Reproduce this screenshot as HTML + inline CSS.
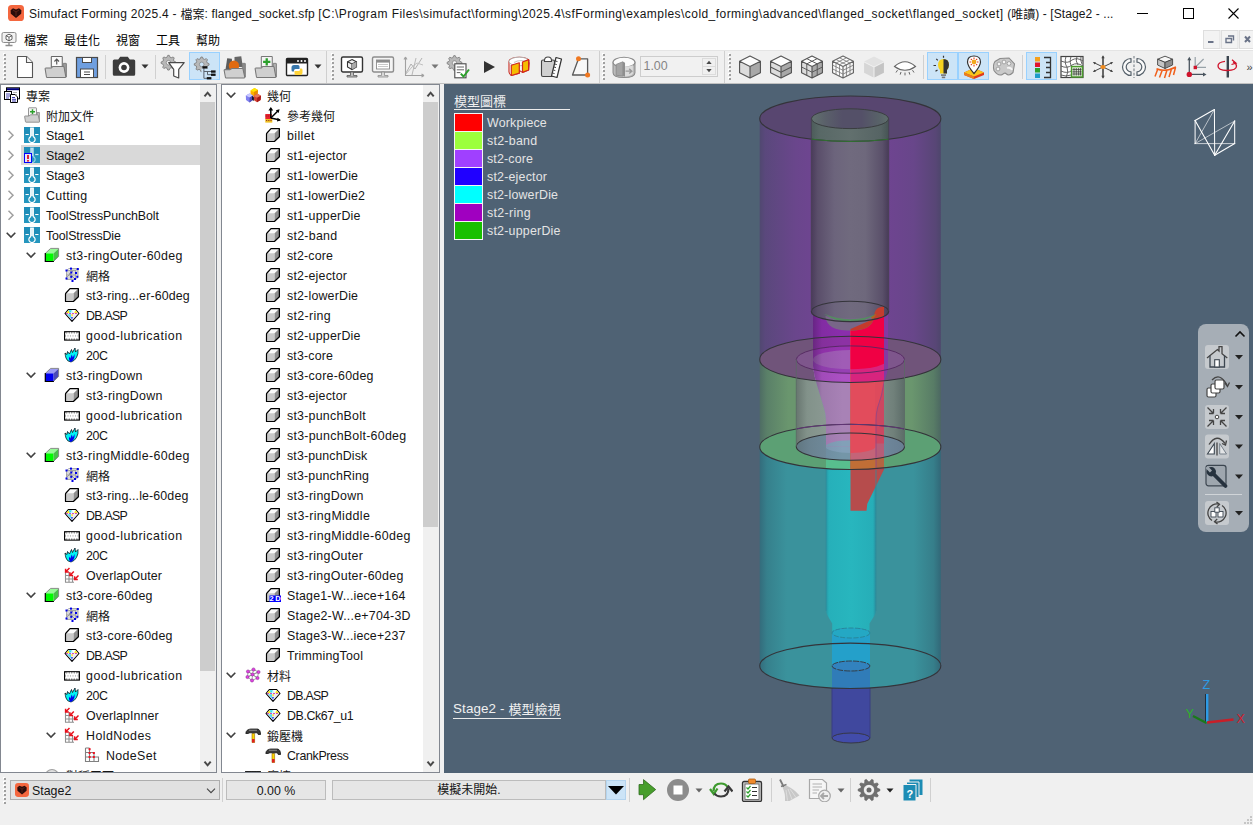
<!DOCTYPE html>
<html lang="zh-Hant"><head><meta charset="utf-8"><title>Simufact Forming</title>
<style>
html,body{margin:0;padding:0}
body{width:1253px;height:825px;overflow:hidden;background:#f0f0f0;font-family:"Liberation Sans","Noto Sans CJK TC",sans-serif;font-size:12px;color:#000;position:relative}
div,span,svg{position:absolute;box-sizing:border-box}
i{font-style:normal;font-size:12px;letter-spacing:0;position:relative;top:1px}
.t{white-space:nowrap;line-height:20px;height:20px;font-size:12.4px;color:#151515}
.row{left:0;height:20px;width:100%}
#title{left:0;top:0;width:1253px;height:27px;background:#fff}
#menu{left:0;top:27px;width:1253px;height:23px;background:#fff}
#tb{left:0;top:50px;width:1253px;height:34px;background:#f0f0f0;border-top:1px solid #e4e4e4}
.panel{background:#fff;border:1px solid #828790;overflow:hidden}
.sb{background:#f0f0f0;width:16px;top:0;bottom:0;right:0}
.thumb{background:#cdcdcd;left:0;width:15px}
#view{left:444px;top:84px;width:809px;height:689px;background:#4f6274;overflow:hidden}
#bottom{left:0;top:773px;width:1253px;height:52px;background:#f0f0f0}
.m{top:3px;height:23px;line-height:23px;font-size:12.4px;white-space:nowrap}
</style></head>
<body>
<div id="title"><svg style="left:8px;top:5px" width="16" height="16" viewBox="0 0 16 16"><rect x="0" y="0" width="16" height="16" rx="3.6" fill="#f4673f"/><path d="M2.6 5.2L5 3.2L8 4.4L11 3.2L13.4 5.2L13.2 8.8L8 13L2.8 8.8Z" fill="#2a0c0a"/><path d="M5 5L8 7L11 5M8 7V11" stroke="#6a2a1c" stroke-width="0.8" fill="none"/></svg><span class="t" style="left:29px;top:3px;letter-spacing:0.257px;font-size:12px;height:22px;line-height:22px;white-space:pre">Simufact Forming 2025.4 - </span><span class="t" style="left:180.4px;top:3px;letter-spacing:0.182px;font-size:12px;height:22px;line-height:22px;white-space:pre"><i>檔案</i>: flanged_socket.sfp </span><span class="t" style="left:318.3px;top:3px;letter-spacing:0.444px;font-size:12px;height:22px;line-height:22px;white-space:pre">[C:\Program Files\simufact\forming\2025.4\sfForming\examples\cold_forming\advanced\flanged_socket\flanged_socket] </span><span class="t" style="left:1007.2px;top:3px;letter-spacing:0.089px;font-size:12px;height:22px;line-height:22px;white-space:pre">(<i>唯讀</i>) - [Stage2 - ...</span><svg style="left:1120px;top:0" width="133" height="27" viewBox="0 0 133 27"><path d="M17 13.5H28" stroke="#000" stroke-width="1"/><rect x="63.5" y="8.500" width="10" height="10" fill="none" stroke="#000" stroke-width="1"/><path d="M108.500 8.500L118.500 18.500M118.500 8.500L108.500 18.500" stroke="#000" stroke-width="1.1"/></svg></div>
<div id="menu"><svg style="left:1px;top:4px" width="16" height="16" viewBox="0 0 16 16"><rect x="1" y="1.5" width="14" height="10" rx="1.5" fill="#f2f2f2" stroke="#8c8c8c" stroke-width="1"/><path d="M8 3.2L11 4.7V8.2L8 9.8L5 8.2V4.7Z" fill="#fff" stroke="#555" stroke-width="0.9"/><path d="M5 4.7L8 6.2L11 4.7M8 6.2V9.8" stroke="#555" stroke-width="0.9" fill="none"/><path d="M8 11.5V14M4.5 14.5H11.5" stroke="#8c8c8c" stroke-width="1.4"/></svg><span class="m" style="left:24px;font-size:12px">檔案</span><span class="m" style="left:64px;font-size:12px">最佳化</span><span class="m" style="left:116px;font-size:12px">視窗</span><span class="m" style="left:156px;font-size:12px">工具</span><span class="m" style="left:196px;font-size:12px">幫助</span><svg style="left:1202px;top:0" width="51" height="23" viewBox="0 0 51 23"><rect x="1.5" y="3.5" width="16.5" height="18" fill="#f3f3f3" stroke="#dedede" stroke-width="1"/><rect x="19.5" y="3.5" width="16.5" height="18" fill="#f3f3f3" stroke="#dedede" stroke-width="1"/><rect x="37.5" y="3.5" width="16.5" height="18" fill="#f3f3f3" stroke="#dedede" stroke-width="1"/><path d="M6 15H11.500" stroke="#6a7388" stroke-width="2"/><path d="M26 9H31.500V13.500M24 11.500H29.500V15.500H24Z" fill="none" stroke="#6a7388" stroke-width="1.400"/><path d="M43 9.500L48 15M48 9.500L43 15" stroke="#6a7388" stroke-width="2"/></svg></div>
<div id="tb"><svg style="left:3px;top:2px" width="4" height="28" viewBox="0 0 4 28"><rect x="0" y="0" width="2" height="2" fill="#fff"/><rect x="1" y="1" width="2" height="2" fill="#a0a0a0"/><rect x="0" y="4" width="2" height="2" fill="#fff"/><rect x="1" y="5" width="2" height="2" fill="#a0a0a0"/><rect x="0" y="8" width="2" height="2" fill="#fff"/><rect x="1" y="9" width="2" height="2" fill="#a0a0a0"/><rect x="0" y="12" width="2" height="2" fill="#fff"/><rect x="1" y="13" width="2" height="2" fill="#a0a0a0"/><rect x="0" y="16" width="2" height="2" fill="#fff"/><rect x="1" y="17" width="2" height="2" fill="#a0a0a0"/><rect x="0" y="20" width="2" height="2" fill="#fff"/><rect x="1" y="21" width="2" height="2" fill="#a0a0a0"/><rect x="0" y="24" width="2" height="2" fill="#fff"/><rect x="1" y="25" width="2" height="2" fill="#a0a0a0"/></svg><svg style="left:13px;top:4px;overflow:visible" width="24" height="24" viewBox="0 0 24 24"><path d="M4.500 1.500H13.500L19.500 7.500V22.500H4.500Z" fill="#fff" stroke="#555" stroke-width="1.1" stroke-linejoin="round"/><path d="M13.500 1.500V7.500H19.500" fill="#f4f4f4" stroke="#555" stroke-width="1.1" stroke-linejoin="round"/></svg><svg style="left:44px;top:4px;overflow:visible" width="24" height="24" viewBox="0.5 0.5 23 23"><path d="M7.500 12V2.500Q7.500 2 8 2H17.500Q18 2 18 2.500V12Z" fill="#fafafa" stroke="#666" stroke-width="1"/><path d="M12.700 9.500V4.500M10.500 6.700L12.700 4.500L14.900 6.700" fill="none" stroke="#555" stroke-width="1.1"/><path d="M19 8.500H21.500Q22 8.500 22 9V21.500H19Z" fill="#9a9a9a" stroke="#777" stroke-width="0.800"/><path d="M1.600 13.800Q1.500 13 2.300 13H7.500L9 11.500H18.800Q19.600 11.500 19.700 12.200L21.400 21.200Q21.500 22 20.700 22H3.600Q2.900 22 2.800 21.300Z" fill="#cfcfcf" stroke="#777" stroke-width="1"/></svg><svg style="left:75px;top:4px;overflow:visible" width="24" height="24" viewBox="0 0 24 24"><rect x="1.500" y="2.500" width="21" height="20" fill="#6f9fe0" stroke="#4a4a4a" stroke-width="1.200"/><rect x="7.500" y="2.500" width="9" height="5" fill="#fff" stroke="#4a4a4a" stroke-width="1"/><rect x="5.500" y="14" width="13" height="8.500" fill="#fff" stroke="#4a4a4a" stroke-width="1"/><path d="M9 17H15M9 19.500H15" stroke="#4a4a4a" stroke-width="1.200"/></svg><div style="left:105px;top:4px;width:1px;height:24px;background:#d0d0d0"></div><svg style="left:112px;top:4px;overflow:visible" width="24" height="24" viewBox="0 0 24 24"><path d="M0.800 6Q0.800 4.500 2.300 4.500H6.200L8.200 1.800H15.800L17.800 4.500H21.700Q23.200 4.500 23.200 6V19.300Q23.200 20.800 21.700 20.800H2.300Q0.800 20.800 0.800 19.300Z" fill="#3c3c3c"/><circle cx="12" cy="12.500" r="5.400" fill="#fff"/><circle cx="12" cy="12.500" r="2.800" fill="#3c3c3c"/></svg><svg style="left:141px;top:13px" width="8" height="5" viewBox="0 0 8 5"><path d="M0.500 0.500H7.500L4 4.500Z" fill="#333"/></svg><div style="left:155px;top:4px;width:1px;height:24px;background:#d0d0d0"></div><svg style="left:161px;top:4px;overflow:visible" width="24" height="24" viewBox="0 0 24 24"><path d="M14.86 6.97L14.86 8.43L12.88 9.33L12.46 10.35L13.22 12.39L12.19 13.42L10.15 12.66L9.13 13.08L8.23 15.06L6.77 15.06L5.87 13.08L4.85 12.66L2.81 13.42L1.78 12.39L2.54 10.35L2.12 9.33L0.14 8.43L0.14 6.97L2.12 6.07L2.54 5.05L1.78 3.01L2.81 1.98L4.85 2.74L5.87 2.32L6.77 0.34L8.23 0.34L9.13 2.32L10.15 2.74L12.19 1.98L13.22 3.01L12.46 5.05L12.88 6.07Z" fill="#b8b8b8" stroke="#808080" stroke-width="0.9" stroke-linejoin="round"/><circle cx="7.500" cy="7.700" r="2.300" fill="#f0f0f0" stroke="#808080" stroke-width="0.700"/><path d="M7.700 7.600H23.200L17.700 14.400V23L12.700 21V14.400Z" fill="#fff" stroke="#4a4a4a" stroke-width="1.200" stroke-linejoin="round"/></svg><div style="left:189px;top:1px;width:31px;height:28px;background:#cce4f7;border:1px solid #99d1ff"></div><svg style="left:192px;top:4px;overflow:visible" width="24" height="24" viewBox="0 0 24 24"><path d="M17.06 8.67L17.06 10.13L15.08 11.03L14.66 12.05L15.42 14.09L14.39 15.12L12.35 14.36L11.33 14.78L10.43 16.76L8.97 16.76L8.07 14.78L7.05 14.36L5.01 15.12L3.98 14.09L4.74 12.05L4.32 11.03L2.34 10.13L2.34 8.67L4.32 7.77L4.74 6.75L3.98 4.71L5.01 3.68L7.05 4.44L8.07 4.02L8.97 2.04L10.43 2.04L11.33 4.02L12.35 4.44L14.39 3.68L15.42 4.71L14.66 6.75L15.08 7.77Z" fill="#b8b8b8" stroke="#808080" stroke-width="0.9" stroke-linejoin="round"/><circle cx="9.700" cy="9.400" r="2.300" fill="#cce4f7" stroke="#808080" stroke-width="0.700"/><rect x="9.500" y="13.500" width="15" height="11" fill="#cce4f7"/><path d="M11.900 13V23.300H15M11.900 16.500H19M15.500 16.500V19.700H19" fill="none" stroke="#5a646e" stroke-width="1"/><rect x="10.400" y="11.200" width="5" height="2.300" fill="#111"/><rect x="19" y="15.400" width="4.600" height="2.300" fill="#111"/><rect x="19" y="18.600" width="4.600" height="2.300" fill="#111"/><rect x="14.800" y="22.100" width="4.600" height="2.300" fill="#111"/></svg><svg style="left:223px;top:4px;overflow:visible" width="24" height="24" viewBox="0.5 0.5 23 23"><path d="M3 14L4.500 3.500L9 4L9.500 14Z" fill="#5c5c5c"/><path d="M11.500 12V2.500L18 1.800L19.500 12Z" fill="#666"/><circle cx="11" cy="10.800" r="5" fill="#e06a10"/><path d="M19 8.500H21.500Q22 8.500 22 9V21.500H19Z" fill="#8a8a8a" stroke="#777" stroke-width="0.700"/><path d="M1.600 15.300Q1.500 14.500 2.300 14.500H7L9 13.500H18.800Q19.600 13.500 19.700 14.200L21.400 21.700Q21.500 22.500 20.700 22.500H3.600Q2.900 22.500 2.800 21.800Z" fill="#d0d0d0" stroke="#777" stroke-width="1"/></svg><svg style="left:254px;top:4px;overflow:visible" width="24" height="24" viewBox="0.5 0.5 23 23"><path d="M7.500 12V2.500Q7.500 2 8 2H17.500Q18 2 18 2.500V12Z" fill="#f4f4f4" stroke="#777" stroke-width="1"/><path d="M12.700 3.500V10.500M9.200 7H16.200" stroke="#2ca02c" stroke-width="2.200"/><path d="M19 8.500H21.500Q22 8.500 22 9V21.500H19Z" fill="#b0b0b0" stroke="#777" stroke-width="0.800"/><path d="M1.600 13.800Q1.500 13 2.300 13H7.500L9 11.500H18.800Q19.600 11.500 19.700 12.200L21.400 21.200Q21.500 22 20.700 22H3.600Q2.900 22 2.800 21.300Z" fill="#cfcfcf" stroke="#777" stroke-width="1"/></svg><svg style="left:285px;top:4px;overflow:visible" width="24" height="24" viewBox="0 0 24 24"><rect x="1.500" y="3.500" width="21" height="17" rx="1" fill="#fff" stroke="#222" stroke-width="1.400"/><rect x="1.500" y="3.500" width="21" height="5" fill="#222"/><circle cx="13" cy="6" r="1" fill="#fff"/><circle cx="16.500" cy="6" r="1" fill="#fff"/><circle cx="20" cy="6" r="1" fill="#fff"/><path d="M9 10H13Q14.500 10 14.500 11.500V14H10.500Q9 14 9 15.500V16.500H7.500Q6.500 16.500 6.500 15V12.500Q6.500 10 9 10Z" fill="#3776ab"/><path d="M15 20H11Q9.500 20 9.500 18.500V16H13.500Q15 16 15 14.500V13.500H16.500Q17.500 13.500 17.500 15V17.500Q17.500 20 15 20Z" fill="#ffd43b"/></svg><svg style="left:314px;top:13px" width="8" height="5" viewBox="0 0 8 5"><path d="M0.500 0.500H7.500L4 4.500Z" fill="#333"/></svg><div style="left:326px;top:0;width:1px;height:33px;background:#cfcfcf"></div><svg style="left:331px;top:2px" width="4" height="28" viewBox="0 0 4 28"><rect x="0" y="0" width="2" height="2" fill="#fff"/><rect x="1" y="1" width="2" height="2" fill="#a0a0a0"/><rect x="0" y="4" width="2" height="2" fill="#fff"/><rect x="1" y="5" width="2" height="2" fill="#a0a0a0"/><rect x="0" y="8" width="2" height="2" fill="#fff"/><rect x="1" y="9" width="2" height="2" fill="#a0a0a0"/><rect x="0" y="12" width="2" height="2" fill="#fff"/><rect x="1" y="13" width="2" height="2" fill="#a0a0a0"/><rect x="0" y="16" width="2" height="2" fill="#fff"/><rect x="1" y="17" width="2" height="2" fill="#a0a0a0"/><rect x="0" y="20" width="2" height="2" fill="#fff"/><rect x="1" y="21" width="2" height="2" fill="#a0a0a0"/><rect x="0" y="24" width="2" height="2" fill="#fff"/><rect x="1" y="25" width="2" height="2" fill="#a0a0a0"/></svg><svg style="left:340px;top:4px;overflow:visible" width="24" height="24" viewBox="0 0 24 24"><rect x="1.500" y="2" width="21" height="15" rx="1.500" fill="#fff" stroke="#333" stroke-width="1.400"/><path d="M12 4.500L16.500 6.800V12L12 14.500L7.500 12V6.800Z" fill="#f0f0f0" stroke="#333" stroke-width="1.100"/><path d="M7.500 6.800L12 9L16.500 6.800M12 9V14.500" fill="none" stroke="#333" stroke-width="1.100"/><path d="M12 9L16.500 6.800V12L12 14.500Z" fill="#aaa"/><path d="M10.500 17H13.500V20.500H17V22H7V20.500H10.500Z" fill="#bdbdbd" stroke="#555" stroke-width="0.800"/></svg><svg style="left:371px;top:4px;overflow:visible" width="24" height="24" viewBox="0 0 24 24"><rect x="1.500" y="2" width="21" height="15" rx="1.500" fill="#f4f4f4" stroke="#8c8c8c" stroke-width="1.400"/><rect x="5.500" y="5" width="13" height="9" fill="#fff" stroke="#8c8c8c" stroke-width="0.900"/><rect x="5.500" y="5" width="13" height="2.600" fill="#8c8c8c"/><path d="M7 9.500H17M7 11.500H17" stroke="#bbb" stroke-width="0.800"/><path d="M10.500 17H13.500V20.500H17V22H7V20.500H10.500Z" fill="#d8d8d8" stroke="#8c8c8c" stroke-width="0.800"/></svg><svg style="left:402px;top:4px;overflow:visible" width="24" height="24" viewBox="0 0 24 24"><path d="M3.500 2V20.500H22M3.500 2L2 4.500M3.500 2L5 4.500M22 20.500L19.500 19M22 20.500L19.500 22" fill="none" stroke="#a0a0a0" stroke-width="1.100"/><path d="M4 18L9 9L13 14L20 3" fill="none" stroke="#b0b0b0" stroke-width="1"/><path d="M4 19L10 12L15 8L21 10" fill="none" stroke="#c0c0c0" stroke-width="1"/><path d="M14 3L10 20" fill="none" stroke="#b8b8b8" stroke-width="1"/></svg><svg style="left:431px;top:13px" width="8" height="5" viewBox="0 0 8 5"><path d="M0.500 0.500H7.500L4 4.500Z" fill="#777"/></svg><svg style="left:446px;top:4px;overflow:visible" width="24" height="24" viewBox="0 0 24 24"><path d="M15.86 7.27L15.86 8.73L13.88 9.63L13.46 10.65L14.22 12.69L13.19 13.72L11.15 12.96L10.13 13.38L9.23 15.36L7.77 15.36L6.87 13.38L5.85 12.96L3.81 13.72L2.78 12.69L3.54 10.65L3.12 9.63L1.14 8.73L1.14 7.27L3.12 6.37L3.54 5.35L2.78 3.31L3.81 2.28L5.85 3.04L6.87 2.62L7.77 0.64L9.23 0.64L10.13 2.62L11.15 3.04L13.19 2.28L14.22 3.31L13.46 5.35L13.88 6.37Z" fill="#b8b8b8" stroke="#808080" stroke-width="0.9" stroke-linejoin="round"/><circle cx="8.500" cy="8" r="2.300" fill="#f0f0f0" stroke="#808080" stroke-width="0.700"/><rect x="8.800" y="8.800" width="11.200" height="14" fill="#fff" stroke="#4a4a4a" stroke-width="1.100"/><path d="M10.800 12H18M10.800 14.800H18M10.800 17.600H14.500" stroke="#666" stroke-width="1"/><path d="M14.800 18.600L17.500 21.500L23 14.500" fill="none" stroke="#2ca02c" stroke-width="2"/></svg><svg style="left:477px;top:4px;overflow:visible" width="24" height="24" viewBox="0 0 24 24"><path d="M7 6L18 12L7 18Z" fill="#333"/></svg><svg style="left:508px;top:4px;overflow:visible" width="24" height="24" viewBox="0 0 24 24"><path d="M1 6.500V17Q1.500 19.500 3.300 20.500L11.300 18.200V15.500L14.500 17.400L20.600 15L21.400 6.500A10.200 4.300 0 0 0 1 6.500Z" fill="#fafafa" stroke="#c8281e" stroke-width="1.100" stroke-linejoin="round"/><ellipse cx="11.200" cy="6.500" rx="10.200" ry="4.300" fill="#fff" stroke="#b0b0b0" stroke-width="0.900"/><path d="M6 7.500Q11 4.500 17 6" fill="none" stroke="#c8c8c8" stroke-width="1.200"/><path d="M3.300 10.200L11.300 7.800V18.200L3.300 20.500Z" fill="#f5bc00" stroke="#d0281e" stroke-width="1.200" stroke-linejoin="round"/><path d="M14.500 7L20.600 4.600V15L14.500 17.400Z" fill="#f5bc00" stroke="#d0281e" stroke-width="1.200" stroke-linejoin="round"/></svg><svg style="left:539px;top:4px;overflow:visible" width="24" height="24" viewBox="0 0 24 24"><path d="M2.500 6.500Q2.500 5 4 5H14Q15.500 5 15.500 6.500V20Q15.500 21.500 14 21.500H4Q2.500 21.500 2.500 20Z" fill="#d0d0d0" stroke="#444" stroke-width="1.100"/><path d="M5.500 5.500Q5.500 2 9 2Q12.500 2 12.500 5.500V6.500H5.500Z" fill="#fff" stroke="#444" stroke-width="1.100"/><path d="M17 2.500L22.500 4L18 22.500L12.500 21Z" fill="#fff" stroke="#333" stroke-width="1.200" stroke-linejoin="round"/><path d="M16.500 6L18.500 6.600M15.800 9L17.800 9.600M15 12L17 12.600M14.300 15L16.300 15.600M13.600 18L15.600 18.600" stroke="#333" stroke-width="0.900"/></svg><svg style="left:570px;top:4px;overflow:visible" width="24" height="24" viewBox="0 0 24 24"><path d="M8.500 3.800H17.600V20H2.500Z" fill="#f8f8f8" stroke="#5a5a5a" stroke-width="1.300" stroke-linejoin="round"/><circle cx="8.500" cy="3.800" r="2.500" fill="#f07820"/><circle cx="17.600" cy="20" r="2.500" fill="#f07820"/></svg><div style="left:599px;top:0;width:1px;height:33px;background:#cfcfcf"></div><svg style="left:602px;top:2px" width="4" height="28" viewBox="0 0 4 28"><rect x="0" y="0" width="2" height="2" fill="#fff"/><rect x="1" y="1" width="2" height="2" fill="#a0a0a0"/><rect x="0" y="4" width="2" height="2" fill="#fff"/><rect x="1" y="5" width="2" height="2" fill="#a0a0a0"/><rect x="0" y="8" width="2" height="2" fill="#fff"/><rect x="1" y="9" width="2" height="2" fill="#a0a0a0"/><rect x="0" y="12" width="2" height="2" fill="#fff"/><rect x="1" y="13" width="2" height="2" fill="#a0a0a0"/><rect x="0" y="16" width="2" height="2" fill="#fff"/><rect x="1" y="17" width="2" height="2" fill="#a0a0a0"/><rect x="0" y="20" width="2" height="2" fill="#fff"/><rect x="1" y="21" width="2" height="2" fill="#a0a0a0"/><rect x="0" y="24" width="2" height="2" fill="#fff"/><rect x="1" y="25" width="2" height="2" fill="#a0a0a0"/></svg><svg style="left:612px;top:4px;overflow:visible" width="24" height="24" viewBox="0.5 0.5 23 23"><path d="M1.500 7.500V17.500Q1.500 22 12 22Q22.500 22 22.500 17.500V7.500Z" fill="#bcbcbc" stroke="#8a8a8a" stroke-width="1"/><ellipse cx="12" cy="7.500" rx="10.500" ry="4.800" fill="#fbfbfb" stroke="#8a8a8a" stroke-width="1"/><path d="M4.500 9.500L11 7V20.500L4.500 20Z" fill="#a4a4a4" stroke="#8a8a8a" stroke-width="0.800"/><path d="M11 7L13 8V21L11 20.500Z" fill="#8e8e8e"/><path d="M13 11Q18 12 20.500 10V18.500Q18 21 13 21Z" fill="#dcdcdc"/><path d="M13.500 16H19M17 13.800L19.500 16L17 18.200" fill="none" stroke="#9a9a9a" stroke-width="1.300"/></svg><div style="left:640px;top:5px;width:78px;height:21px;background:#f1f1f1;border:1px solid #cdcdcd"></div><span class="t" style="left:643.500px;top:5px;color:#858585;font-size:12.400px">1.00</span><div style="left:702px;top:7px;width:14px;height:9px;background:#f0f0f0;border:1px solid #dcdcdc"></div><div style="left:702px;top:15px;width:14px;height:9px;background:#f0f0f0;border:1px solid #dcdcdc"></div><svg style="left:706px;top:9px" width="6" height="13" viewBox="0 0 6 13"><path d="M0.300 4L3 0.800L5.700 4ZM0.300 9L3 12.200L5.700 9Z" fill="#484848"/></svg><div style="left:724px;top:0;width:1px;height:33px;background:#cfcfcf"></div><svg style="left:728px;top:2px" width="4" height="28" viewBox="0 0 4 28"><rect x="0" y="0" width="2" height="2" fill="#fff"/><rect x="1" y="1" width="2" height="2" fill="#a0a0a0"/><rect x="0" y="4" width="2" height="2" fill="#fff"/><rect x="1" y="5" width="2" height="2" fill="#a0a0a0"/><rect x="0" y="8" width="2" height="2" fill="#fff"/><rect x="1" y="9" width="2" height="2" fill="#a0a0a0"/><rect x="0" y="12" width="2" height="2" fill="#fff"/><rect x="1" y="13" width="2" height="2" fill="#a0a0a0"/><rect x="0" y="16" width="2" height="2" fill="#fff"/><rect x="1" y="17" width="2" height="2" fill="#a0a0a0"/><rect x="0" y="20" width="2" height="2" fill="#fff"/><rect x="1" y="21" width="2" height="2" fill="#a0a0a0"/><rect x="0" y="24" width="2" height="2" fill="#fff"/><rect x="1" y="25" width="2" height="2" fill="#a0a0a0"/></svg><svg style="left:738px;top:4px;overflow:visible" width="24" height="24" viewBox="0.5 0.5 23 23"><path d="M12 1.500L22 6.500L12 11.500L2 6.500Z" fill="#fdfdfd"/><path d="M2 6.500L12 11.500V22.500L2 17.500Z" fill="#dcdcdc"/><path d="M12 11.500L22 6.500V17.500L12 22.500Z" fill="#a8a8a8"/><path d="M12 1.500L22 6.500V17.500L12 22.500L2 17.500V6.500ZM2 6.500L12 11.500L22 6.500M12 11.500V22.500" fill="none" stroke="#555" stroke-width="1.100" stroke-linejoin="round"/></svg><svg style="left:769px;top:4px;overflow:visible" width="24" height="24" viewBox="0.5 0.5 23 23"><path d="M12 1.500L22 6.500L12 11.500L2 6.500Z" fill="#fdfdfd"/><path d="M2 6.500L12 11.500V22.500L2 17.500Z" fill="#dcdcdc"/><path d="M12 11.500L22 6.500V17.500L12 22.500Z" fill="#a8a8a8"/><path d="M12 1.500L22 6.500V17.500L12 22.500L2 17.500V6.500ZM2 6.500L12 11.500L22 6.500M12 11.500V22.500" fill="none" stroke="#555" stroke-width="1.100" stroke-linejoin="round"/><path d="M2 12L12 17L22 12" fill="none" stroke="#555" stroke-width="1"/></svg><svg style="left:800px;top:4px;overflow:visible" width="24" height="24" viewBox="0.5 0.5 23 23"><path d="M12 1.500L22 6.500L12 11.500L2 6.500Z" fill="#fdfdfd"/><path d="M2 6.500L12 11.500V22.500L2 17.500Z" fill="#dcdcdc"/><path d="M12 11.500L22 6.500V17.500L12 22.500Z" fill="#a8a8a8"/><path d="M12 1.500L22 6.500V17.500L12 22.500L2 17.500V6.500ZM2 6.500L12 11.500L22 6.500M12 11.500V22.500" fill="none" stroke="#555" stroke-width="1.100" stroke-linejoin="round"/><path d="M2 12L12 17L22 12M7 9V20M17 9V20M7 4L17 9M17 4L7 9" fill="none" stroke="#555" stroke-width="0.900"/></svg><svg style="left:831px;top:4px;overflow:visible" width="24" height="24" viewBox="0.5 0.5 23 23"><path d="M12 1.500L22 6.500L12 11.500L2 6.500Z" fill="#fff"/><path d="M2 6.500L12 11.500V22.500L2 17.500Z" fill="#fff"/><path d="M12 11.500L22 6.500V17.500L12 22.500Z" fill="#f4f4f4"/><path d="M12 1.500L22 6.500V17.500L12 22.500L2 17.500V6.500ZM2 6.500L12 11.500L22 6.500M12 11.500V22.500" fill="none" stroke="#666" stroke-width="1.100" stroke-linejoin="round"/><path d="M2 10.200L12 15.200L22 10.200M2 13.800L12 18.800L22 13.800M5.300 8.200V19.200M8.700 9.800V20.800M15.300 9.800V20.800M18.700 8.200V19.200M5.300 4.800L15.300 9.800M8.700 3.200L18.700 8.200M18.700 4.800L8.700 9.800M15.300 3.200L5.300 8.200" fill="none" stroke="#777" stroke-width="0.800"/></svg><svg style="left:862px;top:4px;overflow:visible" width="24" height="24" viewBox="0.5 0.5 23 23"><path d="M12 2L21.500 6.800L12 11.500L2.500 6.800Z" fill="#e2e2e2"/><path d="M2.500 7.800L11.500 12.300V22L2.500 17.500Z" fill="#d6d6d6"/><path d="M12.500 12.300L21.500 7.800V17.500L12.500 22Z" fill="#c4c4c4"/></svg><svg style="left:893px;top:4px;overflow:visible" width="24" height="24" viewBox="0 0 24 24"><path d="M1.500 11.500Q12 2 22.500 11.500Q12 19 1.500 11.500Z" fill="#fff" stroke="#666" stroke-width="1.100"/><path d="M4.500 15.200L3 17.500M8 17L7.200 19.600M12 17.600V20.400M16 17L16.800 19.600M19.500 15.200L21 17.500" stroke="#666" stroke-width="1"/></svg><div style="left:923px;top:4px;width:1px;height:24px;background:#d0d0d0"></div><div style="left:927px;top:1px;width:31px;height:28px;background:#cce4f7;border:1px solid #99d1ff"></div><svg style="left:930.5px;top:4px;overflow:visible" width="24" height="24" viewBox="0 0 24 24"><path d="M12.500 4Q18 4 18 10Q18 12.500 16 15V18.500H9V15Q7 12.500 7 10Q7 4 12.500 4Z" fill="#f6d21e"/><path d="M12.500 4Q18 4 18 10Q18 12.500 16 15V18.500H12.500Z" fill="#333"/><rect x="10" y="19.300" width="5" height="1.600" fill="#777"/><rect x="10.800" y="21.600" width="3.400" height="1.600" fill="#777"/><path d="M12.500 0.800V2.800M5.300 3.800L6.800 5.300M2.500 10.500H5M4.500 16.300L6.500 15" stroke="#333" stroke-width="1.200"/></svg><div style="left:958px;top:1px;width:31px;height:28px;background:#cce4f7;border:1px solid #99d1ff"></div><svg style="left:961.5px;top:4px;overflow:visible" width="24" height="24" viewBox="0 0 24 24"><path d="M2 17.500L12 13L22 17.500V20L12 24L2 20Z" fill="#e03a1e"/><path d="M2 17.500L12 13L22 17.500L12 21.500Z" fill="#f9c51c"/><path d="M2 17.500L12 21.500V24L2 20Z" fill="#e8801e"/><path d="M12 18.500Q5.500 11 5.500 7Q5.500 1 12 1Q18.500 1 18.500 7Q18.500 11 12 18.500Z" fill="#fff" stroke="#333" stroke-width="1.200"/><circle cx="12" cy="7" r="2.400" fill="#f4a81c"/><path d="M12 2.500V4M12 10V11.500M7.500 7H9M15 7H16.500M8.800 3.800L9.900 4.900M14.100 9.100L15.200 10.200M15.200 3.800L14.100 4.900M9.900 9.100L8.800 10.200" stroke="#e03a1e" stroke-width="1.100"/></svg><svg style="left:992px;top:4px;overflow:visible" width="24" height="24" viewBox="0 0 24 24"><path d="M8 3.500L17 3L22.500 9L21 17.500Q17 21.500 14.500 19Q13 17 10.500 19.500Q6 21.500 2 15.500Q0.500 10 3 6.500Z" fill="#c9c9c9" stroke="#8a8a8a" stroke-width="1.100"/><circle cx="7" cy="9" r="1.900" fill="#f4f4f4" stroke="#8a8a8a" stroke-width="0.700"/><circle cx="12" cy="7" r="1.900" fill="#f4f4f4" stroke="#8a8a8a" stroke-width="0.700"/><circle cx="17" cy="8.500" r="1.900" fill="#f4f4f4" stroke="#8a8a8a" stroke-width="0.700"/><circle cx="6" cy="14" r="1.900" fill="#f4f4f4" stroke="#8a8a8a" stroke-width="0.700"/><path d="M15 13Q19 12 20 15" fill="none" stroke="#f4f4f4" stroke-width="1.800"/></svg><div style="left:1022px;top:4px;width:1px;height:24px;background:#d0d0d0"></div><div style="left:1026px;top:1px;width:31px;height:28px;background:#cce4f7;border:1px solid #99d1ff"></div><svg style="left:1029.5px;top:4px;overflow:visible" width="24" height="24" viewBox="0 0 24 24"><rect x="5" y="2" width="5" height="4.500" fill="#f5a01c"/><rect x="5" y="7.500" width="5" height="4.500" fill="#e0142c"/><rect x="5" y="13" width="5" height="4.500" fill="#2ca02c"/><rect x="5" y="18.500" width="5" height="4.500" fill="#1c9cc8"/><path d="M14 2.500H20.500V22.500H14M16 7.500H20.500M16 12.500H20.500M16 17.500H20.500" fill="none" stroke="#333" stroke-width="1.300"/></svg><svg style="left:1060px;top:4px;overflow:visible" width="24" height="24" viewBox="0 0 24 24"><rect x="1" y="1.500" width="22" height="21" fill="#fff" stroke="#444" stroke-width="1.200"/><path d="M1 6Q8 9 12 5Q17 2 23 6M1 11Q7 14 12 10Q17 7 23 11M1 16Q7 19 12 15.500M1 20Q6 22 11 20M6 1.500Q4 8 7 12Q9 17 6 22.500M11 1.500Q9 8 12 12M17 1.500Q15 6 18 10M21 1.500Q20 5 22 9" fill="none" stroke="#555" stroke-width="0.900"/><rect x="11.500" y="11.500" width="11" height="10.500" fill="#d8e8d0" stroke="#4a9a2c" stroke-width="1.400"/><path d="M14 13V20.500M16.300 13V20.500M18.600 13V20.500M20.500 13V20.500M12.500 14.500H21.500M12.500 16.800H21.500M12.500 19H21.500" stroke="#333" stroke-width="0.700"/></svg><svg style="left:1091px;top:4px;overflow:visible" width="24" height="24" viewBox="0 0 24 24"><path d="M12 1.500V22.500" stroke="#464646" stroke-width="1.600"/><path d="M3 7.700L21 16.300M21 7.700L3 16.300" stroke="#464646" stroke-width="1"/><path d="M12 0.300L10.300 3.300H13.700ZM12 23.700L10.300 20.700H13.700Z" fill="#464646"/><path d="M1.800 7.100L4.900 7.200L3.700 9.500ZM22.200 7.100L19.100 7.200L20.300 9.500ZM1.800 16.900L4.900 16.800L3.700 14.500ZM22.200 16.900L19.100 16.800L20.300 14.500Z" fill="#464646"/><ellipse cx="12" cy="12" rx="2.600" ry="1.900" fill="#f08a1c"/></svg><svg style="left:1122px;top:4px;overflow:visible" width="24" height="24" viewBox="0 0 24 24"><path d="M9 3.500A8.500 8.500 0 0 0 9 20.500V16.800A4.800 4.800 0 0 1 9 7.200Z" fill="#fafafa" stroke="#55606a" stroke-width="1.200" stroke-linejoin="round"/><path d="M15 3.500A8.500 8.500 0 0 1 15 20.500V16.800A4.800 4.800 0 0 0 15 7.200Z" fill="#fafafa" stroke="#55606a" stroke-width="1.200" stroke-linejoin="round"/><path d="M12 1V23" stroke="#8a9298" stroke-width="1.300" stroke-dasharray="2.600 1.600"/></svg><svg style="left:1153px;top:4px;overflow:visible" width="24" height="24" viewBox="0 0 24 24"><path d="M2 21.500L5 13.500M6.500 22.500L9.500 14.500M11.500 23L14 15M16 22L18.500 14M20.500 20L22.500 12.500M3.500 13.800Q12 17.500 23 12" fill="none" stroke="#f0601c" stroke-width="1.500"/><path d="M12 1.200L19.600 4.200L12 7.400L4.600 4.200Z" fill="#f6f6f6" stroke="#444" stroke-width="0.900"/><path d="M4.600 4.200L12 7.400V13.500L4.600 10Z" fill="#c4c4c4" stroke="#444" stroke-width="0.900"/><path d="M12 7.400L19.600 4.200V10L12 13.500Z" fill="#8e8e8e" stroke="#444" stroke-width="0.900"/></svg><svg style="left:1184px;top:4px;overflow:visible" width="24" height="24" viewBox="0 0 24 24"><path d="M5.300 19.500V4M6 19.400H20.500" stroke="#4a545e" stroke-width="1.300" fill="none"/><path d="M5.300 1.800L3.300 5.200H7.300ZM22.500 19.400L19 17.400V21.400Z" fill="#4a545e"/><path d="M11.200 2V12.400H22M11.500 12L19.600 4" stroke="#98a2a8" stroke-width="1.200" fill="none"/><rect x="9.600" y="10.800" width="3.400" height="3.400" fill="#d0142c"/><circle cx="5.300" cy="19.400" r="2.700" fill="#d0142c"/></svg><svg style="left:1215px;top:4px;overflow:visible" width="24" height="24" viewBox="0 0 24 24"><path d="M12.800 1V22.500" stroke="#3a444e" stroke-width="2.400"/><path d="M18 7Q21.500 8.300 21.500 11Q21.500 15.500 12 15.500Q3 15.500 3 11Q3 7.200 10 6.400" fill="none" stroke="#d0142c" stroke-width="1.300"/><path d="M17 4.800L21 8.200L16.500 9.500" fill="none" stroke="#d0142c" stroke-width="1.300"/></svg><span class="t" style="left:1246.500px;top:6px;font-size:11px;color:#444;letter-spacing:-1px">»</span><div style="left:0;top:32px;width:1253px;height:1px;background:#c0c0c0"></div></div>
<div class="panel" style="left:0;top:84px;width:217px;height:689px"><svg style="left:3px;top:2px" width="16" height="16" viewBox="0 0 16 16"><rect x="2.5" y="0.8" width="13" height="11" fill="#fff" stroke="#000" stroke-width="1"/><rect x="3" y="1.2" width="12" height="2" fill="#00007a"/><path d="M9 5.5H13M9 7.5H13" stroke="#999" stroke-width="0.8"/><rect x="0.5" y="4.5" width="7" height="8" fill="#fff" stroke="#000"/><path d="M2 7H6M2 9H6M2 11H5" stroke="#2020a0" stroke-width="0.8"/><path d="M6.5 7.5H11L13.5 10V15.5H6.5Z" fill="#fff" stroke="#000"/><path d="M8 10.5H11M8 12.3H12M8 14H12" stroke="#2020a0" stroke-width="0.9"/></svg><span class="t" style="left:25px;top:1px"><i>專案</i></span><svg style="left:23px;top:22px" width="16" height="16" viewBox="0 0 16 16"><path d="M4.5 9V1.3Q4.5 0.8 5 0.8H12Q12.5 0.8 12.5 1.3V9Z" fill="#f4f4f4" stroke="#8a8a8a" stroke-width="0.9"/><path d="M8.5 2.2V7.2M6 4.7H11" stroke="#2ca02c" stroke-width="1.5"/><path d="M13 5.5H15.2Q15.7 5.5 15.7 6V14.5H13Z" fill="#b8b8b8" stroke="#8a8a8a" stroke-width="0.8"/><path d="M0.6 9.6Q0.5 9 1.1 9H5.2L6.4 7.8H13.6Q14.2 7.8 14.3 8.4L15.6 14.6Q15.7 15.2 15.1 15.2H2.1Q1.6 15.2 1.5 14.7Z" fill="#cfcfcf" stroke="#8a8a8a" stroke-width="0.9"/></svg><span class="t" style="left:45px;top:21px"><i>附加文件</i></span><svg style="left:3px;top:40px" width="16" height="20" viewBox="0 0 16 20"><path d="M4.5 5.7L9 10.2L4.5 14.7" fill="none" stroke="#a0a0a0" stroke-width="1.5"/></svg><svg style="left:23px;top:42px" width="16" height="16" viewBox="0 0 16 16"><rect x="0" y="0" width="16" height="16" fill="#2596be"/><rect x="0" y="0" width="16" height="8" fill="#1f8db8"/><path d="M6.7 1.2V9.6A3.1 3.1 0 1 0 9.3 9.6V1.2Z" fill="#2596be" stroke="#fff" stroke-width="1.2"/><rect x="7.2" y="1" width="1.6" height="8" fill="#fff"/><path d="M1.5 7.5H4.8M11.2 7.5H14.5" stroke="#fff" stroke-width="1.2"/></svg><span class="t" style="left:45px;top:41px;letter-spacing:-0.113px">Stage1</span><div style="left:20px;top:60px;width:179px;height:20px;background:#d9d9d9"></div><svg style="left:3px;top:60px" width="16" height="20" viewBox="0 0 16 20"><path d="M4.5 5.7L9 10.2L4.5 14.7" fill="none" stroke="#a0a0a0" stroke-width="1.5"/></svg><svg style="left:23px;top:62px" width="16" height="16" viewBox="0 0 16 16"><rect x="0" y="0" width="16" height="16" fill="#2596be"/><rect x="0" y="0" width="16" height="8" fill="#1f8db8"/><path d="M6.7 1.2V9.6A3.1 3.1 0 1 0 9.3 9.6V1.2Z" fill="#2596be" stroke="#9ed0e6" stroke-width="1.2"/><rect x="7.2" y="1" width="1.6" height="8" fill="#cfe8f3"/><path d="M11.2 7.5H14.5" stroke="#cfe8f3" stroke-width="1.2"/><rect x="0.5" y="6.5" width="7" height="9" fill="#e8e8f4" stroke="#0000ff" stroke-width="1"/><rect x="3.1" y="8" width="1.8" height="4" fill="#e0102a"/><rect x="3.1" y="13" width="1.8" height="1.6" fill="#e0102a"/></svg><span class="t" style="left:45px;top:61px;letter-spacing:-0.113px">Stage2</span><svg style="left:3px;top:80px" width="16" height="20" viewBox="0 0 16 20"><path d="M4.5 5.7L9 10.2L4.5 14.7" fill="none" stroke="#a0a0a0" stroke-width="1.5"/></svg><svg style="left:23px;top:82px" width="16" height="16" viewBox="0 0 16 16"><rect x="0" y="0" width="16" height="16" fill="#2596be"/><rect x="0" y="0" width="16" height="8" fill="#1f8db8"/><path d="M6.7 1.2V9.6A3.1 3.1 0 1 0 9.3 9.6V1.2Z" fill="#2596be" stroke="#fff" stroke-width="1.2"/><rect x="7.2" y="1" width="1.6" height="8" fill="#fff"/><path d="M1.5 7.5H4.8M11.2 7.5H14.5" stroke="#fff" stroke-width="1.2"/></svg><span class="t" style="left:45px;top:81px;letter-spacing:-0.113px">Stage3</span><svg style="left:3px;top:100px" width="16" height="20" viewBox="0 0 16 20"><path d="M4.5 5.7L9 10.2L4.5 14.7" fill="none" stroke="#a0a0a0" stroke-width="1.5"/></svg><svg style="left:23px;top:102px" width="16" height="16" viewBox="0 0 16 16"><rect x="0" y="0" width="16" height="16" fill="#2596be"/><rect x="0" y="0" width="16" height="8" fill="#1f8db8"/><path d="M6.7 1.2V9.6A3.1 3.1 0 1 0 9.3 9.6V1.2Z" fill="#2596be" stroke="#fff" stroke-width="1.2"/><rect x="7.2" y="1" width="1.6" height="8" fill="#fff"/><path d="M1.5 7.5H4.8M11.2 7.5H14.5" stroke="#fff" stroke-width="1.2"/></svg><span class="t" style="left:45px;top:101px;letter-spacing:0.325px">Cutting</span><svg style="left:3px;top:120px" width="16" height="20" viewBox="0 0 16 20"><path d="M4.5 5.7L9 10.2L4.5 14.7" fill="none" stroke="#a0a0a0" stroke-width="1.5"/></svg><svg style="left:23px;top:122px" width="16" height="16" viewBox="0 0 16 16"><rect x="0" y="0" width="16" height="16" fill="#2596be"/><rect x="0" y="0" width="16" height="8" fill="#1f8db8"/><path d="M6.7 1.2V9.6A3.1 3.1 0 1 0 9.3 9.6V1.2Z" fill="#2596be" stroke="#fff" stroke-width="1.2"/><rect x="7.2" y="1" width="1.6" height="8" fill="#fff"/><path d="M1.5 7.5H4.8M11.2 7.5H14.5" stroke="#fff" stroke-width="1.2"/></svg><span class="t" style="left:45px;top:121px;letter-spacing:-0.075px">ToolStressPunchBolt</span><svg style="left:3px;top:140px" width="16" height="20" viewBox="0 0 16 20"><path d="M2.700 7.700L7 12L11.300 7.700" fill="none" stroke="#404040" stroke-width="1.600"/></svg><svg style="left:23px;top:142px" width="16" height="16" viewBox="0 0 16 16"><rect x="0" y="0" width="16" height="16" fill="#2596be"/><rect x="0" y="0" width="16" height="8" fill="#1f8db8"/><path d="M6.7 1.2V9.6A3.1 3.1 0 1 0 9.3 9.6V1.2Z" fill="#2596be" stroke="#fff" stroke-width="1.2"/><rect x="7.2" y="1" width="1.6" height="8" fill="#fff"/><path d="M1.5 7.5H4.8M11.2 7.5H14.5" stroke="#fff" stroke-width="1.2"/></svg><span class="t" style="left:45px;top:141px;letter-spacing:-0.129px">ToolStressDie</span><svg style="left:23px;top:160px" width="16" height="20" viewBox="0 0 16 20"><path d="M2.700 7.700L7 12L11.300 7.700" fill="none" stroke="#404040" stroke-width="1.600"/></svg><svg style="left:43px;top:162px" width="16" height="16" viewBox="0 0 16 16"><path d="M1.3 6.4L6.600 1.400H14.600L9.400 6.400Z" fill="#96fa96"/><path d="M9.400 6.400L14.600 1.400V9.500L9.400 14.500Z" fill="#48c048"/><path d="M1.300 6.400H9.400V14.500H1.300Z" fill="#00fa00"/><path d="M1.300 6.400L6.600 1.400H14.600V9.500L9.400 14.500" fill="none" stroke="#808080" stroke-width="0.9" stroke-linejoin="round"/><path d="M1.300 5.900V14.500H9.900" fill="none" stroke="#000" stroke-width="1.200"/></svg><span class="t" style="left:65px;top:161px;letter-spacing:0.303px">st3-ringOuter-60deg</span><svg style="left:63px;top:182px" width="16" height="16" viewBox="0 0 16 16"><path d="M2.5 3.5H11.5V12.5H2.5ZM5 1.5H14V10.5" fill="#d8d8d8" stroke="#9a9a9a" stroke-width="0.8"/><path d="M2.5 3.5L5 1.5M11.5 3.5L14 1.5M11.5 12.5L14 10.5M7 3.5V12.5M2.5 8H11.5M5 6L11 12M3 10L9 4" stroke="#8a8a8a" stroke-width="0.7" fill="none"/><g fill="#0000e6"><rect x="1.5" y="2.5" width="2" height="2"/><rect x="6" y="0.6" width="2" height="2"/><rect x="12.8" y="1" width="2" height="2"/><rect x="6.3" y="4.5" width="2" height="2"/><rect x="11" y="5" width="2" height="2"/><rect x="6.3" y="8.8" width="2" height="2"/><rect x="1.5" y="10.5" width="2" height="2"/><rect x="12.3" y="8.8" width="2" height="2"/><rect x="7.5" y="13" width="2" height="2"/><rect x="10" y="11" width="2" height="2"/></g></svg><span class="t" style="left:85px;top:181px"><i>網格</i></span><svg style="left:63px;top:202px" width="16" height="16" viewBox="0 0 16 16"><path d="M1.6 6.2L6 1.6H14.4L9.4 6.4Z" fill="#fafafa"/><path d="M9.4 6.4L14.4 1.6V9.8L9.4 14.5Z" fill="#8e8e8e"/><path d="M1.5 7.2Q1.5 6.3 2.2 6.3H9.4V14.5H1.5Z" fill="#c9c9c9"/><path d="M1.5 14.5V7.2Q1.5 6.5 2 6L6 1.6H14.4V9.8L9.4 14.5Z" fill="none" stroke="#000" stroke-width="1.2" stroke-linejoin="round"/></svg><span class="t" style="left:85px;top:201px;letter-spacing:0.134px">st3-ring...er-60deg</span><svg style="left:63px;top:222px" width="16" height="16" viewBox="0 0 16 16"><path d="M4.300 2.500H11.700L15 6.500L8 14.300L1 6.500Z" fill="#fff" stroke="#000" stroke-width="1.100" stroke-linejoin="round"/><path d="M2 6.200L4.600 3.300L6 6.200Z" fill="#ffe820"/><path d="M6 6.200L8 3.300L10 6.200Z" fill="#c8f4ff"/><path d="M4.600 3.300H8L6 6.200Z" fill="#30e0f0"/><path d="M10 6.200L11.400 3.300L14 6.200Z" fill="#ffe820"/><path d="M2 6.600H14" stroke="#c020c0" stroke-width="0.900" stroke-dasharray="2 1"/><path d="M3 7.200H7L7.500 12Z" fill="#50d8f0"/><path d="M7 7.200H9.500L8 10Z" fill="#ffd030"/><path d="M7.200 10L8.800 10L8 13.500Z" fill="#1020e0"/><path d="M9.500 7.200H13L8.800 12Z" fill="#e8e8f4"/></svg><span class="t" style="left:85px;top:221px;letter-spacing:-0.723px">DB.ASP</span><svg style="left:63px;top:242px" width="16" height="16" viewBox="0 0 16 16"><rect x="0.600" y="4.700" width="14.800" height="8.400" fill="#b4b4b4" stroke="#000" stroke-width="1.100"/><path d="M1.500 6.200L4 11.600L6.500 6.200L9 11.600L11.500 6.200L14 11.600M1.500 11.600L4 6.200L6.500 11.600L9 6.200L11.500 11.600L14 6.200" fill="none" stroke="#fff" stroke-width="1.200"/></svg><span class="t" style="left:85px;top:241px;letter-spacing:0.526px">good-lubrication</span><svg style="left:63px;top:262px" width="16" height="16" viewBox="0 0 16 16"><path d="M1 6L3 7.500L3.500 4.500L5.500 7L7.500 2.500L8.500 5.500L11 1L11.500 5L14 2.500Q14.500 7 12.500 10.500Q10.500 14 7 15Q3 14.500 2 11Q1.300 8.500 1 6Z" fill="#00f4f4" stroke="#0a1420" stroke-width="0.800" stroke-linejoin="round"/><path d="M5 9.500L6.300 11.500L7.800 7.500L8.800 10.500L10.500 7Q11 10.500 9.500 12.800Q8.300 14.600 6.500 14.900Q4.600 13.500 5 9.500Z" fill="#0000f0"/></svg><span class="t" style="left:85px;top:261px;letter-spacing:-0.369px">20C</span><svg style="left:23px;top:280px" width="16" height="20" viewBox="0 0 16 20"><path d="M2.700 7.700L7 12L11.300 7.700" fill="none" stroke="#404040" stroke-width="1.600"/></svg><svg style="left:43px;top:282px" width="16" height="16" viewBox="0 0 16 16"><path d="M1.3 6.4L6.600 1.400H14.600L9.400 6.400Z" fill="#9c9cf4"/><path d="M9.400 6.400L14.600 1.400V9.500L9.400 14.500Z" fill="#4a4ab8"/><path d="M1.300 6.400H9.400V14.500H1.300Z" fill="#0000f0"/><path d="M1.300 6.400L6.600 1.400H14.600V9.500L9.400 14.500" fill="none" stroke="#808080" stroke-width="0.9" stroke-linejoin="round"/><path d="M1.300 5.900V14.500H9.900" fill="none" stroke="#000" stroke-width="1.200"/></svg><span class="t" style="left:65px;top:281px;letter-spacing:0.310px">st3-ringDown</span><svg style="left:63px;top:302px" width="16" height="16" viewBox="0 0 16 16"><path d="M1.6 6.2L6 1.6H14.4L9.4 6.4Z" fill="#fafafa"/><path d="M9.4 6.4L14.4 1.6V9.8L9.4 14.5Z" fill="#8e8e8e"/><path d="M1.5 7.2Q1.5 6.3 2.2 6.3H9.4V14.5H1.5Z" fill="#c9c9c9"/><path d="M1.5 14.5V7.2Q1.5 6.5 2 6L6 1.6H14.4V9.8L9.4 14.5Z" fill="none" stroke="#000" stroke-width="1.2" stroke-linejoin="round"/></svg><span class="t" style="left:85px;top:301px;letter-spacing:0.310px">st3-ringDown</span><svg style="left:63px;top:322px" width="16" height="16" viewBox="0 0 16 16"><rect x="0.600" y="4.700" width="14.800" height="8.400" fill="#b4b4b4" stroke="#000" stroke-width="1.100"/><path d="M1.500 6.200L4 11.600L6.500 6.200L9 11.600L11.500 6.200L14 11.600M1.500 11.600L4 6.200L6.500 11.600L9 6.200L11.500 11.600L14 6.200" fill="none" stroke="#fff" stroke-width="1.200"/></svg><span class="t" style="left:85px;top:321px;letter-spacing:0.526px">good-lubrication</span><svg style="left:63px;top:342px" width="16" height="16" viewBox="0 0 16 16"><path d="M1 6L3 7.500L3.500 4.500L5.500 7L7.500 2.500L8.500 5.500L11 1L11.500 5L14 2.500Q14.500 7 12.500 10.500Q10.500 14 7 15Q3 14.500 2 11Q1.300 8.500 1 6Z" fill="#00f4f4" stroke="#0a1420" stroke-width="0.800" stroke-linejoin="round"/><path d="M5 9.500L6.300 11.500L7.800 7.500L8.800 10.500L10.500 7Q11 10.500 9.500 12.800Q8.300 14.600 6.500 14.900Q4.600 13.500 5 9.500Z" fill="#0000f0"/></svg><span class="t" style="left:85px;top:341px;letter-spacing:-0.369px">20C</span><svg style="left:23px;top:360px" width="16" height="20" viewBox="0 0 16 20"><path d="M2.700 7.700L7 12L11.300 7.700" fill="none" stroke="#404040" stroke-width="1.600"/></svg><svg style="left:43px;top:362px" width="16" height="16" viewBox="0 0 16 16"><path d="M1.3 6.4L6.600 1.400H14.600L9.400 6.400Z" fill="#96fa96"/><path d="M9.400 6.400L14.600 1.400V9.500L9.400 14.500Z" fill="#48c048"/><path d="M1.300 6.400H9.400V14.500H1.300Z" fill="#00fa00"/><path d="M1.300 6.400L6.600 1.400H14.600V9.500L9.400 14.500" fill="none" stroke="#808080" stroke-width="0.9" stroke-linejoin="round"/><path d="M1.300 5.900V14.500H9.900" fill="none" stroke="#000" stroke-width="1.200"/></svg><span class="t" style="left:65px;top:361px;letter-spacing:0.365px">st3-ringMiddle-60deg</span><svg style="left:63px;top:382px" width="16" height="16" viewBox="0 0 16 16"><path d="M2.5 3.5H11.5V12.5H2.5ZM5 1.5H14V10.5" fill="#d8d8d8" stroke="#9a9a9a" stroke-width="0.8"/><path d="M2.5 3.5L5 1.5M11.5 3.5L14 1.5M11.5 12.5L14 10.5M7 3.5V12.5M2.5 8H11.5M5 6L11 12M3 10L9 4" stroke="#8a8a8a" stroke-width="0.7" fill="none"/><g fill="#0000e6"><rect x="1.5" y="2.5" width="2" height="2"/><rect x="6" y="0.6" width="2" height="2"/><rect x="12.8" y="1" width="2" height="2"/><rect x="6.3" y="4.5" width="2" height="2"/><rect x="11" y="5" width="2" height="2"/><rect x="6.3" y="8.8" width="2" height="2"/><rect x="1.5" y="10.5" width="2" height="2"/><rect x="12.3" y="8.8" width="2" height="2"/><rect x="7.5" y="13" width="2" height="2"/><rect x="10" y="11" width="2" height="2"/></g></svg><span class="t" style="left:85px;top:381px"><i>網格</i></span><svg style="left:63px;top:402px" width="16" height="16" viewBox="0 0 16 16"><path d="M1.6 6.2L6 1.6H14.4L9.4 6.4Z" fill="#fafafa"/><path d="M9.4 6.4L14.4 1.6V9.8L9.4 14.5Z" fill="#8e8e8e"/><path d="M1.5 7.2Q1.5 6.3 2.2 6.3H9.4V14.5H1.5Z" fill="#c9c9c9"/><path d="M1.5 14.5V7.2Q1.5 6.5 2 6L6 1.6H14.4V9.8L9.4 14.5Z" fill="none" stroke="#000" stroke-width="1.2" stroke-linejoin="round"/></svg><span class="t" style="left:85px;top:401px;letter-spacing:0.136px">st3-ring...le-60deg</span><svg style="left:63px;top:422px" width="16" height="16" viewBox="0 0 16 16"><path d="M4.300 2.500H11.700L15 6.500L8 14.300L1 6.500Z" fill="#fff" stroke="#000" stroke-width="1.100" stroke-linejoin="round"/><path d="M2 6.200L4.600 3.300L6 6.200Z" fill="#ffe820"/><path d="M6 6.200L8 3.300L10 6.200Z" fill="#c8f4ff"/><path d="M4.600 3.300H8L6 6.200Z" fill="#30e0f0"/><path d="M10 6.200L11.400 3.300L14 6.200Z" fill="#ffe820"/><path d="M2 6.600H14" stroke="#c020c0" stroke-width="0.900" stroke-dasharray="2 1"/><path d="M3 7.200H7L7.500 12Z" fill="#50d8f0"/><path d="M7 7.200H9.500L8 10Z" fill="#ffd030"/><path d="M7.200 10L8.800 10L8 13.500Z" fill="#1020e0"/><path d="M9.500 7.200H13L8.800 12Z" fill="#e8e8f4"/></svg><span class="t" style="left:85px;top:421px;letter-spacing:-0.723px">DB.ASP</span><svg style="left:63px;top:442px" width="16" height="16" viewBox="0 0 16 16"><rect x="0.600" y="4.700" width="14.800" height="8.400" fill="#b4b4b4" stroke="#000" stroke-width="1.100"/><path d="M1.500 6.200L4 11.600L6.500 6.200L9 11.600L11.500 6.200L14 11.600M1.500 11.600L4 6.200L6.500 11.600L9 6.200L11.500 11.600L14 6.200" fill="none" stroke="#fff" stroke-width="1.200"/></svg><span class="t" style="left:85px;top:441px;letter-spacing:0.526px">good-lubrication</span><svg style="left:63px;top:462px" width="16" height="16" viewBox="0 0 16 16"><path d="M1 6L3 7.500L3.500 4.500L5.500 7L7.500 2.500L8.500 5.500L11 1L11.500 5L14 2.500Q14.500 7 12.500 10.500Q10.500 14 7 15Q3 14.500 2 11Q1.300 8.500 1 6Z" fill="#00f4f4" stroke="#0a1420" stroke-width="0.800" stroke-linejoin="round"/><path d="M5 9.500L6.300 11.500L7.800 7.500L8.800 10.500L10.500 7Q11 10.500 9.500 12.800Q8.300 14.600 6.500 14.900Q4.600 13.500 5 9.500Z" fill="#0000f0"/></svg><span class="t" style="left:85px;top:461px;letter-spacing:-0.369px">20C</span><svg style="left:63px;top:482px" width="16" height="16" viewBox="0 0 16 16"><path d="M1.5 5V15.2M5 5V15.2M8.5 8.5V15.2M1 8.5H8.5M1 12H10M1 15.2H10" stroke="#909090" stroke-width="1.1" fill="none"/><g stroke="#e8101c" stroke-width="1.5" fill="none"><path d="M5.5 1L1.8 4.7M1.6 1.8V5H4.8"/><path d="M9.8 4.5L6.1 8.2M5.9 5.3V8.5H9.1"/><path d="M14.5 8.5L10.8 12.2M10.6 9.3V12.5H13.8"/></g></svg><span class="t" style="left:85px;top:481px;letter-spacing:0.142px">OverlapOuter</span><svg style="left:23px;top:500px" width="16" height="20" viewBox="0 0 16 20"><path d="M2.700 7.700L7 12L11.300 7.700" fill="none" stroke="#404040" stroke-width="1.600"/></svg><svg style="left:43px;top:502px" width="16" height="16" viewBox="0 0 16 16"><path d="M1.3 6.4L6.600 1.400H14.600L9.400 6.400Z" fill="#96fa96"/><path d="M9.400 6.400L14.600 1.400V9.500L9.400 14.500Z" fill="#48c048"/><path d="M1.300 6.400H9.400V14.500H1.300Z" fill="#00fa00"/><path d="M1.300 6.400L6.600 1.400H14.600V9.500L9.400 14.500" fill="none" stroke="#808080" stroke-width="0.9" stroke-linejoin="round"/><path d="M1.300 5.900V14.500H9.900" fill="none" stroke="#000" stroke-width="1.200"/></svg><span class="t" style="left:65px;top:501px;letter-spacing:0.235px">st3-core-60deg</span><svg style="left:63px;top:522px" width="16" height="16" viewBox="0 0 16 16"><path d="M2.5 3.5H11.5V12.5H2.5ZM5 1.5H14V10.5" fill="#d8d8d8" stroke="#9a9a9a" stroke-width="0.8"/><path d="M2.5 3.5L5 1.5M11.5 3.5L14 1.5M11.5 12.5L14 10.5M7 3.5V12.5M2.5 8H11.5M5 6L11 12M3 10L9 4" stroke="#8a8a8a" stroke-width="0.7" fill="none"/><g fill="#0000e6"><rect x="1.5" y="2.5" width="2" height="2"/><rect x="6" y="0.6" width="2" height="2"/><rect x="12.8" y="1" width="2" height="2"/><rect x="6.3" y="4.5" width="2" height="2"/><rect x="11" y="5" width="2" height="2"/><rect x="6.3" y="8.8" width="2" height="2"/><rect x="1.5" y="10.5" width="2" height="2"/><rect x="12.3" y="8.8" width="2" height="2"/><rect x="7.5" y="13" width="2" height="2"/><rect x="10" y="11" width="2" height="2"/></g></svg><span class="t" style="left:85px;top:521px"><i>網格</i></span><svg style="left:63px;top:542px" width="16" height="16" viewBox="0 0 16 16"><path d="M1.6 6.2L6 1.6H14.4L9.4 6.4Z" fill="#fafafa"/><path d="M9.4 6.4L14.4 1.6V9.8L9.4 14.5Z" fill="#8e8e8e"/><path d="M1.5 7.2Q1.5 6.3 2.2 6.3H9.4V14.5H1.5Z" fill="#c9c9c9"/><path d="M1.5 14.5V7.2Q1.5 6.5 2 6L6 1.6H14.4V9.8L9.4 14.5Z" fill="none" stroke="#000" stroke-width="1.2" stroke-linejoin="round"/></svg><span class="t" style="left:85px;top:541px;letter-spacing:0.235px">st3-core-60deg</span><svg style="left:63px;top:562px" width="16" height="16" viewBox="0 0 16 16"><path d="M4.300 2.500H11.700L15 6.500L8 14.300L1 6.500Z" fill="#fff" stroke="#000" stroke-width="1.100" stroke-linejoin="round"/><path d="M2 6.200L4.600 3.300L6 6.200Z" fill="#ffe820"/><path d="M6 6.200L8 3.300L10 6.200Z" fill="#c8f4ff"/><path d="M4.600 3.300H8L6 6.200Z" fill="#30e0f0"/><path d="M10 6.200L11.400 3.300L14 6.200Z" fill="#ffe820"/><path d="M2 6.600H14" stroke="#c020c0" stroke-width="0.900" stroke-dasharray="2 1"/><path d="M3 7.200H7L7.500 12Z" fill="#50d8f0"/><path d="M7 7.200H9.500L8 10Z" fill="#ffd030"/><path d="M7.200 10L8.800 10L8 13.500Z" fill="#1020e0"/><path d="M9.500 7.200H13L8.800 12Z" fill="#e8e8f4"/></svg><span class="t" style="left:85px;top:561px;letter-spacing:-0.723px">DB.ASP</span><svg style="left:63px;top:582px" width="16" height="16" viewBox="0 0 16 16"><rect x="0.600" y="4.700" width="14.800" height="8.400" fill="#b4b4b4" stroke="#000" stroke-width="1.100"/><path d="M1.500 6.200L4 11.600L6.500 6.200L9 11.600L11.500 6.200L14 11.600M1.500 11.600L4 6.200L6.500 11.600L9 6.200L11.500 11.600L14 6.200" fill="none" stroke="#fff" stroke-width="1.200"/></svg><span class="t" style="left:85px;top:581px;letter-spacing:0.526px">good-lubrication</span><svg style="left:63px;top:602px" width="16" height="16" viewBox="0 0 16 16"><path d="M1 6L3 7.500L3.500 4.500L5.500 7L7.500 2.500L8.500 5.500L11 1L11.500 5L14 2.500Q14.500 7 12.500 10.500Q10.500 14 7 15Q3 14.500 2 11Q1.300 8.500 1 6Z" fill="#00f4f4" stroke="#0a1420" stroke-width="0.800" stroke-linejoin="round"/><path d="M5 9.500L6.300 11.500L7.800 7.500L8.800 10.500L10.500 7Q11 10.500 9.500 12.800Q8.300 14.600 6.500 14.900Q4.600 13.500 5 9.500Z" fill="#0000f0"/></svg><span class="t" style="left:85px;top:601px;letter-spacing:-0.369px">20C</span><svg style="left:63px;top:622px" width="16" height="16" viewBox="0 0 16 16"><path d="M1.5 5V15.2M5 5V15.2M8.5 8.5V15.2M1 8.5H8.5M1 12H10M1 15.2H10" stroke="#909090" stroke-width="1.1" fill="none"/><g stroke="#e8101c" stroke-width="1.5" fill="none"><path d="M5.5 1L1.8 4.7M1.6 1.8V5H4.8"/><path d="M9.8 4.5L6.1 8.2M5.9 5.3V8.5H9.1"/><path d="M14.5 8.5L10.8 12.2M10.6 9.3V12.5H13.8"/></g></svg><span class="t" style="left:85px;top:621px;letter-spacing:0.094px">OverlapInner</span><svg style="left:43px;top:640px" width="16" height="20" viewBox="0 0 16 20"><path d="M2.700 7.700L7 12L11.300 7.700" fill="none" stroke="#404040" stroke-width="1.600"/></svg><svg style="left:63px;top:642px" width="16" height="16" viewBox="0 0 16 16"><path d="M1.5 5V15.2M5 5V15.2M8.5 8.5V15.2M1 8.5H8.5M1 12H10M1 15.2H10" stroke="#909090" stroke-width="1.1" fill="none"/><g stroke="#e8101c" stroke-width="1.5" fill="none"><path d="M5.5 1L1.8 4.7M1.6 1.8V5H4.8"/><path d="M9.8 4.5L6.1 8.2M5.9 5.3V8.5H9.1"/><path d="M14.5 8.5L10.8 12.2M10.6 9.3V12.5H13.8"/></g></svg><span class="t" style="left:85px;top:641px;letter-spacing:0.463px">HoldNodes</span><svg style="left:83px;top:662px" width="16" height="16" viewBox="0 0 16 16"><path d="M1.5 1V14.5H14.5V10H1.5M5.5 1V14.5M1.5 5.5H10V14.5M5.5 1H1.5" stroke="#808080" stroke-width="1.1" fill="none"/><g fill="#f01020"><rect x="4.6" y="1.2" width="2" height="2"/><rect x="4.6" y="5" width="2" height="2"/><rect x="8.8" y="5" width="2" height="2"/><rect x="4.6" y="9" width="2" height="2"/><rect x="8.8" y="9" width="2" height="2"/></g></svg><span class="t" style="left:105px;top:661px;letter-spacing:0.355px">NodeSet</span><span class="t" style="left:65px;top:681px"><i>對稱平面</i></span><svg style="left:43px;top:682px" width="16" height="16" viewBox="0 0 16 16"><circle cx="8" cy="9" r="6.5" fill="#e0e0e0" stroke="#a0a0a0" stroke-width="1.2"/></svg><div class="sb"><svg style="left:3px;top:5px" width="10" height="8" viewBox="0 0 10 8"><path d="M1.500 6.300L4.600 2.700L7.700 6.300" fill="none" stroke="#484848" stroke-width="2"/></svg><div class="thumb" style="top:17px;height:569px"></div><svg style="left:3px;bottom:4px" width="10" height="8" viewBox="0 0 10 8"><path d="M1.500 1.700L4.600 5.300L7.700 1.700" fill="none" stroke="#484848" stroke-width="2"/></svg></div></div>
<div class="panel" style="left:221px;top:84px;width:219px;height:689px"><svg style="left:2px;top:0px" width="16" height="20" viewBox="0 0 16 20"><path d="M2.700 7.700L7 12L11.300 7.700" fill="none" stroke="#404040" stroke-width="1.600"/></svg><svg style="left:23px;top:2px" width="16" height="16" viewBox="0 0 16 16"><path d="M5.5 3.5L9.5 1L13 3L12.5 7.5L8.5 9.5L5.5 7.5Z" fill="#ffb000"/><path d="M5.5 3.5L9.5 1L13 3L9 5Z" fill="#ffe800"/><path d="M9 5L13 3L12.5 7.5L8.8 9.5Z" fill="#e88a00"/><path d="M0.8 8.5L4.5 6.5L8 8.5L7.8 13L4.5 15.5L1 13Z" fill="#8080f0"/><path d="M0.8 8.5L4.5 6.5L8 8.5L4.6 10.5Z" fill="#c8c8ff"/><path d="M4.6 10.5L8 8.5L7.8 13L4.5 15.5Z" fill="#5050b8"/><path d="M8.5 9L12.5 6.8L16 8.8L15.6 13L12 15.2L8.6 13Z" fill="#d04030"/><path d="M8.5 9L12.5 6.8L16 8.8L12.2 10.8Z" fill="#e8785a"/><path d="M12.2 10.8L16 8.8L15.6 13L12 15.2Z" fill="#a81818"/><path d="M7 9L9 10.5L8.8 14L7 12.8Z" fill="#181830"/></svg><span class="t" style="left:45px;top:1px"><i>幾何</i></span><svg style="left:43px;top:22px" width="16" height="16" viewBox="0 0 16 16"><rect x="0.3" y="7" width="6.5" height="5" fill="#e8202c"/><rect x="0.3" y="12" width="7" height="3.6" fill="#f0c020"/><path d="M0.5 9H6M1 13.5H7" stroke="#802020" stroke-width="0.8" stroke-dasharray="1.2 1"/><g stroke="#000" stroke-width="1.5" fill="none"><path d="M5.8 11V1.5"/><path d="M5.8 11L13.6 3.2"/><path d="M5.8 11L15 13"/></g><path d="M5.8 0L3.4 3.4H8.2Z" fill="#000"/><path d="M14.6 2.2L10.8 3.2L13.6 6Z" fill="#000"/><path d="M16 13.2L12.5 10.8L12 14.4Z" fill="#000"/></svg><span class="t" style="left:65px;top:21px"><i>參考幾何</i></span><svg style="left:43px;top:42px" width="16" height="16" viewBox="0 0 16 16"><path d="M1.6 6.2L6 1.6H14.4L9.4 6.4Z" fill="#fafafa"/><path d="M9.4 6.4L14.4 1.6V9.8L9.4 14.5Z" fill="#8e8e8e"/><path d="M1.5 7.2Q1.5 6.3 2.2 6.3H9.4V14.5H1.5Z" fill="#c9c9c9"/><path d="M1.5 14.5V7.2Q1.5 6.5 2 6L6 1.6H14.4V9.8L9.4 14.5Z" fill="none" stroke="#000" stroke-width="1.2" stroke-linejoin="round"/></svg><span class="t" style="left:65px;top:41px;letter-spacing:0.374px">billet</span><svg style="left:43px;top:62px" width="16" height="16" viewBox="0 0 16 16"><path d="M1.6 6.2L6 1.6H14.4L9.4 6.4Z" fill="#fafafa"/><path d="M9.4 6.4L14.4 1.6V9.8L9.4 14.5Z" fill="#8e8e8e"/><path d="M1.5 7.2Q1.5 6.3 2.2 6.3H9.4V14.5H1.5Z" fill="#c9c9c9"/><path d="M1.5 14.5V7.2Q1.5 6.5 2 6L6 1.6H14.4V9.8L9.4 14.5Z" fill="none" stroke="#000" stroke-width="1.2" stroke-linejoin="round"/></svg><span class="t" style="left:65px;top:61px;letter-spacing:0.214px">st1-ejector</span><svg style="left:43px;top:82px" width="16" height="16" viewBox="0 0 16 16"><path d="M1.6 6.2L6 1.6H14.4L9.4 6.4Z" fill="#fafafa"/><path d="M9.4 6.4L14.4 1.6V9.8L9.4 14.5Z" fill="#8e8e8e"/><path d="M1.5 7.2Q1.5 6.3 2.2 6.3H9.4V14.5H1.5Z" fill="#c9c9c9"/><path d="M1.5 14.5V7.2Q1.5 6.5 2 6L6 1.6H14.4V9.8L9.4 14.5Z" fill="none" stroke="#000" stroke-width="1.2" stroke-linejoin="round"/></svg><span class="t" style="left:65px;top:81px;letter-spacing:0.195px">st1-lowerDie</span><svg style="left:43px;top:102px" width="16" height="16" viewBox="0 0 16 16"><path d="M1.6 6.2L6 1.6H14.4L9.4 6.4Z" fill="#fafafa"/><path d="M9.4 6.4L14.4 1.6V9.8L9.4 14.5Z" fill="#8e8e8e"/><path d="M1.5 7.2Q1.5 6.3 2.2 6.3H9.4V14.5H1.5Z" fill="#c9c9c9"/><path d="M1.5 14.5V7.2Q1.5 6.5 2 6L6 1.6H14.4V9.8L9.4 14.5Z" fill="none" stroke="#000" stroke-width="1.2" stroke-linejoin="round"/></svg><span class="t" style="left:65px;top:101px;letter-spacing:0.178px">st1-lowerDie2</span><svg style="left:43px;top:122px" width="16" height="16" viewBox="0 0 16 16"><path d="M1.6 6.2L6 1.6H14.4L9.4 6.4Z" fill="#fafafa"/><path d="M9.4 6.4L14.4 1.6V9.8L9.4 14.5Z" fill="#8e8e8e"/><path d="M1.5 7.2Q1.5 6.3 2.2 6.3H9.4V14.5H1.5Z" fill="#c9c9c9"/><path d="M1.5 14.5V7.2Q1.5 6.5 2 6L6 1.6H14.4V9.8L9.4 14.5Z" fill="none" stroke="#000" stroke-width="1.2" stroke-linejoin="round"/></svg><span class="t" style="left:65px;top:121px;letter-spacing:0.226px">st1-upperDie</span><svg style="left:43px;top:142px" width="16" height="16" viewBox="0 0 16 16"><path d="M1.6 6.2L6 1.6H14.4L9.4 6.4Z" fill="#fafafa"/><path d="M9.4 6.4L14.4 1.6V9.8L9.4 14.5Z" fill="#8e8e8e"/><path d="M1.5 7.2Q1.5 6.3 2.2 6.3H9.4V14.5H1.5Z" fill="#c9c9c9"/><path d="M1.5 14.5V7.2Q1.5 6.5 2 6L6 1.6H14.4V9.8L9.4 14.5Z" fill="none" stroke="#000" stroke-width="1.2" stroke-linejoin="round"/></svg><span class="t" style="left:65px;top:141px;letter-spacing:0.269px">st2-band</span><svg style="left:43px;top:162px" width="16" height="16" viewBox="0 0 16 16"><path d="M1.6 6.2L6 1.6H14.4L9.4 6.4Z" fill="#fafafa"/><path d="M9.4 6.4L14.4 1.6V9.8L9.4 14.5Z" fill="#8e8e8e"/><path d="M1.5 7.2Q1.5 6.3 2.2 6.3H9.4V14.5H1.5Z" fill="#c9c9c9"/><path d="M1.5 14.5V7.2Q1.5 6.5 2 6L6 1.6H14.4V9.8L9.4 14.5Z" fill="none" stroke="#000" stroke-width="1.2" stroke-linejoin="round"/></svg><span class="t" style="left:65px;top:161px;letter-spacing:0.171px">st2-core</span><svg style="left:43px;top:182px" width="16" height="16" viewBox="0 0 16 16"><path d="M1.6 6.2L6 1.6H14.4L9.4 6.4Z" fill="#fafafa"/><path d="M9.4 6.4L14.4 1.6V9.8L9.4 14.5Z" fill="#8e8e8e"/><path d="M1.5 7.2Q1.5 6.3 2.2 6.3H9.4V14.5H1.5Z" fill="#c9c9c9"/><path d="M1.5 14.5V7.2Q1.5 6.5 2 6L6 1.6H14.4V9.8L9.4 14.5Z" fill="none" stroke="#000" stroke-width="1.2" stroke-linejoin="round"/></svg><span class="t" style="left:65px;top:181px;letter-spacing:0.214px">st2-ejector</span><svg style="left:43px;top:202px" width="16" height="16" viewBox="0 0 16 16"><path d="M1.6 6.2L6 1.6H14.4L9.4 6.4Z" fill="#fafafa"/><path d="M9.4 6.4L14.4 1.6V9.8L9.4 14.5Z" fill="#8e8e8e"/><path d="M1.5 7.2Q1.5 6.3 2.2 6.3H9.4V14.5H1.5Z" fill="#c9c9c9"/><path d="M1.5 14.5V7.2Q1.5 6.5 2 6L6 1.6H14.4V9.8L9.4 14.5Z" fill="none" stroke="#000" stroke-width="1.2" stroke-linejoin="round"/></svg><span class="t" style="left:65px;top:201px;letter-spacing:0.195px">st2-lowerDie</span><svg style="left:43px;top:222px" width="16" height="16" viewBox="0 0 16 16"><path d="M1.6 6.2L6 1.6H14.4L9.4 6.4Z" fill="#fafafa"/><path d="M9.4 6.4L14.4 1.6V9.8L9.4 14.5Z" fill="#8e8e8e"/><path d="M1.5 7.2Q1.5 6.3 2.2 6.3H9.4V14.5H1.5Z" fill="#c9c9c9"/><path d="M1.5 14.5V7.2Q1.5 6.5 2 6L6 1.6H14.4V9.8L9.4 14.5Z" fill="none" stroke="#000" stroke-width="1.2" stroke-linejoin="round"/></svg><span class="t" style="left:65px;top:221px;letter-spacing:0.325px">st2-ring</span><svg style="left:43px;top:242px" width="16" height="16" viewBox="0 0 16 16"><path d="M1.6 6.2L6 1.6H14.4L9.4 6.4Z" fill="#fafafa"/><path d="M9.4 6.4L14.4 1.6V9.8L9.4 14.5Z" fill="#8e8e8e"/><path d="M1.5 7.2Q1.5 6.3 2.2 6.3H9.4V14.5H1.5Z" fill="#c9c9c9"/><path d="M1.5 14.5V7.2Q1.5 6.5 2 6L6 1.6H14.4V9.8L9.4 14.5Z" fill="none" stroke="#000" stroke-width="1.2" stroke-linejoin="round"/></svg><span class="t" style="left:65px;top:241px;letter-spacing:0.226px">st2-upperDie</span><svg style="left:43px;top:262px" width="16" height="16" viewBox="0 0 16 16"><path d="M1.6 6.2L6 1.6H14.4L9.4 6.4Z" fill="#fafafa"/><path d="M9.4 6.4L14.4 1.6V9.8L9.4 14.5Z" fill="#8e8e8e"/><path d="M1.5 7.2Q1.5 6.3 2.2 6.3H9.4V14.5H1.5Z" fill="#c9c9c9"/><path d="M1.5 14.5V7.2Q1.5 6.5 2 6L6 1.6H14.4V9.8L9.4 14.5Z" fill="none" stroke="#000" stroke-width="1.2" stroke-linejoin="round"/></svg><span class="t" style="left:65px;top:261px;letter-spacing:0.171px">st3-core</span><svg style="left:43px;top:282px" width="16" height="16" viewBox="0 0 16 16"><path d="M1.6 6.2L6 1.6H14.4L9.4 6.4Z" fill="#fafafa"/><path d="M9.4 6.4L14.4 1.6V9.8L9.4 14.5Z" fill="#8e8e8e"/><path d="M1.5 7.2Q1.5 6.3 2.2 6.3H9.4V14.5H1.5Z" fill="#c9c9c9"/><path d="M1.5 14.5V7.2Q1.5 6.5 2 6L6 1.6H14.4V9.8L9.4 14.5Z" fill="none" stroke="#000" stroke-width="1.2" stroke-linejoin="round"/></svg><span class="t" style="left:65px;top:281px;letter-spacing:0.235px">st3-core-60deg</span><svg style="left:43px;top:302px" width="16" height="16" viewBox="0 0 16 16"><path d="M1.6 6.2L6 1.6H14.4L9.4 6.4Z" fill="#fafafa"/><path d="M9.4 6.4L14.4 1.6V9.8L9.4 14.5Z" fill="#8e8e8e"/><path d="M1.5 7.2Q1.5 6.3 2.2 6.3H9.4V14.5H1.5Z" fill="#c9c9c9"/><path d="M1.5 14.5V7.2Q1.5 6.5 2 6L6 1.6H14.4V9.8L9.4 14.5Z" fill="none" stroke="#000" stroke-width="1.2" stroke-linejoin="round"/></svg><span class="t" style="left:65px;top:301px;letter-spacing:0.214px">st3-ejector</span><svg style="left:43px;top:322px" width="16" height="16" viewBox="0 0 16 16"><path d="M1.6 6.2L6 1.6H14.4L9.4 6.4Z" fill="#fafafa"/><path d="M9.4 6.4L14.4 1.6V9.8L9.4 14.5Z" fill="#8e8e8e"/><path d="M1.5 7.2Q1.5 6.3 2.2 6.3H9.4V14.5H1.5Z" fill="#c9c9c9"/><path d="M1.5 14.5V7.2Q1.5 6.5 2 6L6 1.6H14.4V9.8L9.4 14.5Z" fill="none" stroke="#000" stroke-width="1.2" stroke-linejoin="round"/></svg><span class="t" style="left:65px;top:321px;letter-spacing:0.238px">st3-punchBolt</span><svg style="left:43px;top:342px" width="16" height="16" viewBox="0 0 16 16"><path d="M1.6 6.2L6 1.6H14.4L9.4 6.4Z" fill="#fafafa"/><path d="M9.4 6.4L14.4 1.6V9.8L9.4 14.5Z" fill="#8e8e8e"/><path d="M1.5 7.2Q1.5 6.3 2.2 6.3H9.4V14.5H1.5Z" fill="#c9c9c9"/><path d="M1.5 14.5V7.2Q1.5 6.5 2 6L6 1.6H14.4V9.8L9.4 14.5Z" fill="none" stroke="#000" stroke-width="1.2" stroke-linejoin="round"/></svg><span class="t" style="left:65px;top:341px;letter-spacing:0.264px">st3-punchBolt-60deg</span><svg style="left:43px;top:362px" width="16" height="16" viewBox="0 0 16 16"><path d="M1.6 6.2L6 1.6H14.4L9.4 6.4Z" fill="#fafafa"/><path d="M9.4 6.4L14.4 1.6V9.8L9.4 14.5Z" fill="#8e8e8e"/><path d="M1.5 7.2Q1.5 6.3 2.2 6.3H9.4V14.5H1.5Z" fill="#c9c9c9"/><path d="M1.5 14.5V7.2Q1.5 6.5 2 6L6 1.6H14.4V9.8L9.4 14.5Z" fill="none" stroke="#000" stroke-width="1.2" stroke-linejoin="round"/></svg><span class="t" style="left:65px;top:361px;letter-spacing:0.149px">st3-punchDisk</span><svg style="left:43px;top:382px" width="16" height="16" viewBox="0 0 16 16"><path d="M1.6 6.2L6 1.6H14.4L9.4 6.4Z" fill="#fafafa"/><path d="M9.4 6.4L14.4 1.6V9.8L9.4 14.5Z" fill="#8e8e8e"/><path d="M1.5 7.2Q1.5 6.3 2.2 6.3H9.4V14.5H1.5Z" fill="#c9c9c9"/><path d="M1.5 14.5V7.2Q1.5 6.5 2 6L6 1.6H14.4V9.8L9.4 14.5Z" fill="none" stroke="#000" stroke-width="1.2" stroke-linejoin="round"/></svg><span class="t" style="left:65px;top:381px;letter-spacing:0.171px">st3-punchRing</span><svg style="left:43px;top:402px" width="16" height="16" viewBox="0 0 16 16"><path d="M1.6 6.2L6 1.6H14.4L9.4 6.4Z" fill="#fafafa"/><path d="M9.4 6.4L14.4 1.6V9.8L9.4 14.5Z" fill="#8e8e8e"/><path d="M1.5 7.2Q1.5 6.3 2.2 6.3H9.4V14.5H1.5Z" fill="#c9c9c9"/><path d="M1.5 14.5V7.2Q1.5 6.5 2 6L6 1.6H14.4V9.8L9.4 14.5Z" fill="none" stroke="#000" stroke-width="1.2" stroke-linejoin="round"/></svg><span class="t" style="left:65px;top:401px;letter-spacing:0.310px">st3-ringDown</span><svg style="left:43px;top:422px" width="16" height="16" viewBox="0 0 16 16"><path d="M1.6 6.2L6 1.6H14.4L9.4 6.4Z" fill="#fafafa"/><path d="M9.4 6.4L14.4 1.6V9.8L9.4 14.5Z" fill="#8e8e8e"/><path d="M1.5 7.2Q1.5 6.3 2.2 6.3H9.4V14.5H1.5Z" fill="#c9c9c9"/><path d="M1.5 14.5V7.2Q1.5 6.5 2 6L6 1.6H14.4V9.8L9.4 14.5Z" fill="none" stroke="#000" stroke-width="1.2" stroke-linejoin="round"/></svg><span class="t" style="left:65px;top:421px;letter-spacing:0.384px">st3-ringMiddle</span><svg style="left:43px;top:442px" width="16" height="16" viewBox="0 0 16 16"><path d="M1.6 6.2L6 1.6H14.4L9.4 6.4Z" fill="#fafafa"/><path d="M9.4 6.4L14.4 1.6V9.8L9.4 14.5Z" fill="#8e8e8e"/><path d="M1.5 7.2Q1.5 6.3 2.2 6.3H9.4V14.5H1.5Z" fill="#c9c9c9"/><path d="M1.5 14.5V7.2Q1.5 6.5 2 6L6 1.6H14.4V9.8L9.4 14.5Z" fill="none" stroke="#000" stroke-width="1.2" stroke-linejoin="round"/></svg><span class="t" style="left:65px;top:441px;letter-spacing:0.365px">st3-ringMiddle-60deg</span><svg style="left:43px;top:462px" width="16" height="16" viewBox="0 0 16 16"><path d="M1.6 6.2L6 1.6H14.4L9.4 6.4Z" fill="#fafafa"/><path d="M9.4 6.4L14.4 1.6V9.8L9.4 14.5Z" fill="#8e8e8e"/><path d="M1.5 7.2Q1.5 6.3 2.2 6.3H9.4V14.5H1.5Z" fill="#c9c9c9"/><path d="M1.5 14.5V7.2Q1.5 6.5 2 6L6 1.6H14.4V9.8L9.4 14.5Z" fill="none" stroke="#000" stroke-width="1.2" stroke-linejoin="round"/></svg><span class="t" style="left:65px;top:461px;letter-spacing:0.295px">st3-ringOuter</span><svg style="left:43px;top:482px" width="16" height="16" viewBox="0 0 16 16"><path d="M1.6 6.2L6 1.6H14.4L9.4 6.4Z" fill="#fafafa"/><path d="M9.4 6.4L14.4 1.6V9.8L9.4 14.5Z" fill="#8e8e8e"/><path d="M1.5 7.2Q1.5 6.3 2.2 6.3H9.4V14.5H1.5Z" fill="#c9c9c9"/><path d="M1.5 14.5V7.2Q1.5 6.5 2 6L6 1.6H14.4V9.8L9.4 14.5Z" fill="none" stroke="#000" stroke-width="1.2" stroke-linejoin="round"/></svg><span class="t" style="left:65px;top:481px;letter-spacing:0.303px">st3-ringOuter-60deg</span><svg style="left:43px;top:502px" width="16" height="16" viewBox="0 0 16 16"><path d="M1.6 6.2L6 1.6H14.4L9.4 6.4Z" fill="#fafafa"/><path d="M9.4 6.4L14.4 1.6V9.8L9.4 14.5Z" fill="#8e8e8e"/><path d="M1.5 7.2Q1.5 6.3 2.2 6.3H9.4V14.5H1.5Z" fill="#c9c9c9"/><path d="M1.5 14.5V7.2Q1.5 6.5 2 6L6 1.6H14.4V9.8L9.4 14.5Z" fill="none" stroke="#000" stroke-width="1.2" stroke-linejoin="round"/><rect x="4.5" y="8.5" width="11.5" height="6.5" fill="#0000ff"/><text x="4.6" y="14.4" font-family="Liberation Sans,sans-serif" font-weight="bold" font-size="7.5" fill="#fff" textLength="11">2D</text></svg><span class="t" style="left:65px;top:501px;letter-spacing:0.164px">Stage1-W...iece+164</span><svg style="left:43px;top:522px" width="16" height="16" viewBox="0 0 16 16"><path d="M1.6 6.2L6 1.6H14.4L9.4 6.4Z" fill="#fafafa"/><path d="M9.4 6.4L14.4 1.6V9.8L9.4 14.5Z" fill="#8e8e8e"/><path d="M1.5 7.2Q1.5 6.3 2.2 6.3H9.4V14.5H1.5Z" fill="#c9c9c9"/><path d="M1.5 14.5V7.2Q1.5 6.5 2 6L6 1.6H14.4V9.8L9.4 14.5Z" fill="none" stroke="#000" stroke-width="1.2" stroke-linejoin="round"/></svg><span class="t" style="left:65px;top:521px;letter-spacing:0.224px">Stage2-W...e+704-3D</span><svg style="left:43px;top:542px" width="16" height="16" viewBox="0 0 16 16"><path d="M1.6 6.2L6 1.6H14.4L9.4 6.4Z" fill="#fafafa"/><path d="M9.4 6.4L14.4 1.6V9.8L9.4 14.5Z" fill="#8e8e8e"/><path d="M1.5 7.2Q1.5 6.3 2.2 6.3H9.4V14.5H1.5Z" fill="#c9c9c9"/><path d="M1.5 14.5V7.2Q1.5 6.5 2 6L6 1.6H14.4V9.8L9.4 14.5Z" fill="none" stroke="#000" stroke-width="1.2" stroke-linejoin="round"/></svg><span class="t" style="left:65px;top:541px;letter-spacing:0.164px">Stage3-W...iece+237</span><svg style="left:43px;top:562px" width="16" height="16" viewBox="0 0 16 16"><path d="M1.6 6.2L6 1.6H14.4L9.4 6.4Z" fill="#fafafa"/><path d="M9.4 6.4L14.4 1.6V9.8L9.4 14.5Z" fill="#8e8e8e"/><path d="M1.5 7.2Q1.5 6.3 2.2 6.3H9.4V14.5H1.5Z" fill="#c9c9c9"/><path d="M1.5 14.5V7.2Q1.5 6.5 2 6L6 1.6H14.4V9.8L9.4 14.5Z" fill="none" stroke="#000" stroke-width="1.2" stroke-linejoin="round"/></svg><span class="t" style="left:65px;top:561px;letter-spacing:0.181px">TrimmingTool</span><svg style="left:2px;top:580px" width="16" height="20" viewBox="0 0 16 20"><path d="M2.700 7.700L7 12L11.300 7.700" fill="none" stroke="#404040" stroke-width="1.600"/></svg><svg style="left:23px;top:582px" width="16" height="16" viewBox="0 0 16 16"><g stroke="#909090" stroke-width="0.8" fill="none"><path d="M3 4.500L8.500 2.500L13.500 5L12.500 11L7 13.500L2.500 10ZM3 4.500L7.500 7.500L13.500 5M7.500 7.500L7 13.500M2.500 10L7.500 7.500L12.500 11M8.500 2.500L7.500 7.500M3 4.500L12.500 11M13.500 5L2.500 10"/></g><g fill="#e040e0" stroke="#80208a" stroke-width="0.5"><circle cx="3" cy="4.500" r="1.600"/><circle cx="8.500" cy="2.500" r="1.600"/><circle cx="13.500" cy="5" r="1.600"/><circle cx="12.500" cy="11" r="1.600"/><circle cx="7" cy="13.500" r="1.600"/><circle cx="2.500" cy="10" r="1.600"/><circle cx="7.500" cy="7.500" r="1.600"/></g></svg><span class="t" style="left:45px;top:581px"><i>材料</i></span><svg style="left:43px;top:602px" width="16" height="16" viewBox="0 0 16 16"><path d="M4.300 2.500H11.700L15 6.500L8 14.300L1 6.500Z" fill="#fff" stroke="#000" stroke-width="1.100" stroke-linejoin="round"/><path d="M2 6.200L4.600 3.300L6 6.200Z" fill="#ffe820"/><path d="M6 6.200L8 3.300L10 6.200Z" fill="#c8f4ff"/><path d="M4.600 3.300H8L6 6.200Z" fill="#30e0f0"/><path d="M10 6.200L11.400 3.300L14 6.200Z" fill="#ffe820"/><path d="M2 6.600H14" stroke="#c020c0" stroke-width="0.900" stroke-dasharray="2 1"/><path d="M3 7.200H7L7.500 12Z" fill="#50d8f0"/><path d="M7 7.200H9.500L8 10Z" fill="#ffd030"/><path d="M7.200 10L8.800 10L8 13.500Z" fill="#1020e0"/><path d="M9.500 7.200H13L8.800 12Z" fill="#e8e8f4"/></svg><span class="t" style="left:65px;top:601px;letter-spacing:-0.723px">DB.ASP</span><svg style="left:43px;top:622px" width="16" height="16" viewBox="0 0 16 16"><path d="M4.300 2.500H11.700L15 6.500L8 14.300L1 6.500Z" fill="#fff" stroke="#000" stroke-width="1.100" stroke-linejoin="round"/><path d="M2 6.200L4.600 3.300L6 6.200Z" fill="#ffe820"/><path d="M6 6.200L8 3.300L10 6.200Z" fill="#c8f4ff"/><path d="M4.600 3.300H8L6 6.200Z" fill="#30e0f0"/><path d="M10 6.200L11.400 3.300L14 6.200Z" fill="#ffe820"/><path d="M2 6.600H14" stroke="#c020c0" stroke-width="0.900" stroke-dasharray="2 1"/><path d="M3 7.200H7L7.500 12Z" fill="#50d8f0"/><path d="M7 7.200H9.500L8 10Z" fill="#ffd030"/><path d="M7.200 10L8.800 10L8 13.500Z" fill="#1020e0"/><path d="M9.500 7.200H13L8.800 12Z" fill="#e8e8f4"/></svg><span class="t" style="left:65px;top:621px;letter-spacing:-0.394px">DB.Ck67_u1</span><svg style="left:2px;top:640px" width="16" height="20" viewBox="0 0 16 20"><path d="M2.700 7.700L7 12L11.300 7.700" fill="none" stroke="#404040" stroke-width="1.600"/></svg><svg style="left:23px;top:642px" width="16" height="16" viewBox="0 0 16 16"><path d="M7 6.5H9.6V15.5H7Z" fill="#ffd400" stroke="#8a6a00" stroke-width="0.6"/><path d="M7 12H9.6V15.5H7Z" fill="#e02020"/><path d="M0.8 6.5Q1 2.5 5.5 2H12.5Q15.5 2.5 15.6 7.5H13.2Q13 5.8 11.5 5.8H5.2Q3.6 5.8 3.4 6.5Z" fill="#3a3a3a" stroke="#000" stroke-width="0.7"/><path d="M4 3.2H12" stroke="#aaa" stroke-width="0.8"/></svg><span class="t" style="left:45px;top:641px"><i>鍛壓機</i></span><svg style="left:43px;top:662px" width="16" height="16" viewBox="0 0 16 16"><path d="M7 6.5H9.6V15.5H7Z" fill="#ffd400" stroke="#8a6a00" stroke-width="0.6"/><path d="M7 12H9.6V15.5H7Z" fill="#e02020"/><path d="M0.8 6.5Q1 2.5 5.5 2H12.5Q15.5 2.5 15.6 7.5H13.2Q13 5.8 11.5 5.8H5.2Q3.6 5.8 3.4 6.5Z" fill="#3a3a3a" stroke="#000" stroke-width="0.7"/><path d="M4 3.2H12" stroke="#aaa" stroke-width="0.8"/></svg><span class="t" style="left:65px;top:661px;letter-spacing:-0.335px">CrankPress</span><svg style="left:23px;top:682px" width="16" height="16" viewBox="0 0 16 16"><rect x="0.600" y="4.700" width="14.800" height="8.400" fill="#b4b4b4" stroke="#000" stroke-width="1.100"/><path d="M1.500 6.200L4 11.600L6.500 6.200L9 11.600L11.500 6.200L14 11.600M1.500 11.600L4 6.200L6.500 11.600L9 6.200L11.500 11.600L14 6.200" fill="none" stroke="#fff" stroke-width="1.200"/></svg><span class="t" style="left:45px;top:681px"><i>摩擦</i></span><div class="sb"><svg style="left:3px;top:5px" width="10" height="8" viewBox="0 0 10 8"><path d="M1.500 6.300L4.600 2.700L7.700 6.300" fill="none" stroke="#484848" stroke-width="2"/></svg><div class="thumb" style="top:17px;height:425px"></div><svg style="left:3px;bottom:4px" width="10" height="8" viewBox="0 0 10 8"><path d="M1.500 1.700L4.600 5.300L7.700 1.700" fill="none" stroke="#484848" stroke-width="2"/></svg></div></div>
<div id="view"><svg style="left:0;top:0" width="809" height="688" viewBox="444 84 809 688"><defs><linearGradient id="gRing" x1="759.7" y1="0" x2="940.8" y2="0" gradientUnits="userSpaceOnUse"><stop offset="0" stop-color="rgb(80,72,112)"/><stop offset="0.03" stop-color="rgb(90,72,124)"/><stop offset="0.2" stop-color="rgb(106,70,140)"/><stop offset="0.33" stop-color="rgb(112,68,146)"/><stop offset="0.67" stop-color="rgb(112,68,146)"/><stop offset="0.85" stop-color="rgb(104,70,138)"/><stop offset="0.97" stop-color="rgb(88,70,118)"/><stop offset="1" stop-color="rgb(78,70,108)"/></linearGradient><linearGradient id="gBand" x1="759.7" y1="0" x2="940.8" y2="0" gradientUnits="userSpaceOnUse"><stop offset="0" stop-color="rgb(78,108,100)"/><stop offset="0.04" stop-color="rgb(90,128,104)"/><stop offset="0.16" stop-color="rgb(106,150,110)"/><stop offset="0.84" stop-color="rgb(106,150,110)"/><stop offset="0.96" stop-color="rgb(88,124,102)"/><stop offset="1" stop-color="rgb(76,104,98)"/></linearGradient><linearGradient id="gDie" x1="759.7" y1="0" x2="940.8" y2="0" gradientUnits="userSpaceOnUse"><stop offset="0" stop-color="rgb(52,108,124)"/><stop offset="0.04" stop-color="rgb(54,128,140)"/><stop offset="0.15" stop-color="rgb(58,146,156)"/><stop offset="0.85" stop-color="rgb(58,146,156)"/><stop offset="0.96" stop-color="rgb(54,126,138)"/><stop offset="1" stop-color="rgb(50,104,120)"/></linearGradient><linearGradient id="gCore" x1="811.5" y1="0" x2="888.5" y2="0" gradientUnits="userSpaceOnUse"><stop offset="0" stop-color="rgb(74,60,90)"/><stop offset="0.08" stop-color="rgb(90,78,106)"/><stop offset="0.3" stop-color="rgb(108,100,124)"/><stop offset="0.5" stop-color="rgb(112,106,126)"/><stop offset="0.7" stop-color="rgb(110,104,124)"/><stop offset="0.92" stop-color="rgb(90,80,106)"/><stop offset="1" stop-color="rgb(72,60,88)"/></linearGradient><linearGradient id="gCoreTop" x1="811.5" y1="0" x2="888.5" y2="0" gradientUnits="userSpaceOnUse"><stop offset="0" stop-color="rgb(76,92,90)"/><stop offset="0.1" stop-color="rgb(88,104,102)"/><stop offset="0.5" stop-color="rgb(98,112,110)"/><stop offset="0.9" stop-color="rgb(86,100,100)"/><stop offset="1" stop-color="rgb(70,84,84)"/></linearGradient><linearGradient id="gInner" x1="796.3" y1="0" x2="904.5" y2="0" gradientUnits="userSpaceOnUse"><stop offset="0" stop-color="rgb(104,118,112)"/><stop offset="0.1" stop-color="rgb(130,146,138)"/><stop offset="0.35" stop-color="rgb(142,156,150)"/><stop offset="0.65" stop-color="rgb(136,150,146)"/><stop offset="0.9" stop-color="rgb(112,128,122)"/><stop offset="1" stop-color="rgb(92,108,104)"/></linearGradient><linearGradient id="gChan" x1="826" y1="0" x2="876" y2="0" gradientUnits="userSpaceOnUse"><stop offset="0" stop-color="rgb(40,150,164)"/><stop offset="0.06" stop-color="rgb(38,176,186)"/><stop offset="0.5" stop-color="rgb(40,182,190)"/><stop offset="0.94" stop-color="rgb(38,174,184)"/><stop offset="1" stop-color="rgb(40,140,156)"/></linearGradient><linearGradient id="gCoreCap" x1="811.5" y1="0" x2="888.5" y2="0" gradientUnits="userSpaceOnUse"><stop offset="0" stop-color="rgb(98,114,110)"/><stop offset="0.18" stop-color="rgb(90,96,106)"/><stop offset="0.4" stop-color="rgb(84,80,104)"/><stop offset="0.65" stop-color="rgb(84,80,104)"/><stop offset="0.88" stop-color="rgb(88,98,104)"/><stop offset="1" stop-color="rgb(94,110,108)"/></linearGradient><linearGradient id="gInB" x1="796.3" y1="0" x2="904.5" y2="0" gradientUnits="userSpaceOnUse"><stop offset="0" stop-color="rgb(96,118,128)"/><stop offset="0.12" stop-color="rgb(106,130,144)"/><stop offset="0.4" stop-color="rgb(114,142,160)"/><stop offset="0.7" stop-color="rgb(114,140,160)"/><stop offset="1" stop-color="rgb(104,126,146)"/></linearGradient><linearGradient id="gShade" x1="813" y1="0" x2="888" y2="0" gradientUnits="userSpaceOnUse"><stop offset="0" stop-color="rgb(40,20,60)" stop-opacity="0.35"/><stop offset="0.12" stop-color="rgb(40,20,60)" stop-opacity="0.08"/><stop offset="0.4" stop-color="rgb(40,20,60)" stop-opacity="0"/><stop offset="1" stop-color="rgb(40,20,60)" stop-opacity="0"/></linearGradient><clipPath id="cTop"><ellipse cx="850.3" cy="118.7" rx="90.55" ry="22.7" /></clipPath><clipPath id="cRingBot"><ellipse cx="850.3" cy="359.4" rx="90.55" ry="23.1" /></clipPath><clipPath id="cBandBot"><ellipse cx="850.3" cy="446.9" rx="90.55" ry="22.6" /></clipPath><clipPath id="cDieBot"><ellipse cx="850.3" cy="665.8" rx="90.55" ry="22.7" /></clipPath><clipPath id="cCavL"><path d="M813 305V366Q814 376 817 385Q821 398 824 408Q826 414 826 420V461H850.5V305Z"/></clipPath><clipPath id="cRed"><path d="M850.5 329L874 318.7L874.5 313Q875.500 309.500 878 308L884 306V469.500L867.3 503.800L866.500 510.800H850.5Z"/></clipPath><clipPath id="cCoreLow"><path d="M811.3 0H888.7V311.4A38.7 10.2 0 0 1 811.3 311.4Z"/></clipPath><clipPath id="cBelowInB"><path d="M796.3 446.6A54.1 13.6 0 0 0 904.5 446.6V600H796.3Z"/></clipPath></defs><path d="M759.7 446.9V665.8A90.55 22.7 0 0 0 940.8 665.8V446.9Z" fill="url(#gDie)"/><path d="M759.7 359.4V446.9A90.55 22.6 0 0 0 940.8 446.9V359.4Z" fill="url(#gBand)"/><path d="M759.7 118.7V359.4A90.55 23.1 0 0 0 940.8 359.4V118.7A90.55 22.7 0 0 0 759.7 118.7Z" fill="url(#gRing)"/><ellipse cx="850.3" cy="118.7" rx="90.55" ry="22.7" fill="rgb(88,70,112)"/><path d="M826 460V609Q826 613 827.500 615.500L832.200 623.500V634H869.500V623.500L874.500 615.500Q876 613 876 609V460Z" fill="url(#gChan)"/><path d="M832 633V738A19 5 0 0 0 870 738V633A19 5 0 0 0 832 633Z" fill="rgb(64,72,158)"/><path d="M832 633V688.500H870V633A19 5 0 0 0 832 633Z" fill="rgb(48,124,184)"/><path d="M832 633V666A19 5 0 0 0 870 666V633A19 5 0 0 0 832 633Z" fill="rgb(36,160,202)"/><ellipse cx="851" cy="633" rx="19" ry="5" fill="rgb(36,168,196)" stroke="rgb(40,132,150)" stroke-width="0.9" stroke-dasharray="5 1.5"/><ellipse cx="851" cy="666" rx="19" ry="5" fill="rgb(50,130,190)" stroke="#34343a" stroke-width="0.9" stroke-dasharray="6 1"/><ellipse cx="851" cy="738" rx="19" ry="5" fill="rgb(66,76,170)" stroke="#34343a" stroke-width="0.9"/><path d="M832 688V738M870 688V738" stroke="rgb(56,60,130)" stroke-width="1"/><g clip-path="url(#cBandBot)"><rect x="750" y="420" width="200" height="60" fill="rgb(92,160,116)"/></g><path d="M796.3 359.6V446.6A54.1 13.6 0 0 1 904.5 446.6V359.6Z" fill="url(#gInner)"/><ellipse cx="850.4" cy="446.6" rx="54.1" ry="13.6" fill="url(#gInB)"/><g clip-path="url(#cRingBot)"><rect x="750" y="330" width="200" height="60" fill="rgb(112,84,122)"/></g><ellipse cx="850.4" cy="359.6" rx="54.1" ry="13.7" fill="rgb(126,86,140)"/><g clip-path="url(#cCavL)"><rect x="800" y="300" width="60" height="180" fill="rgb(116,150,168)"/><path d="M825.4 0H875.4V446.6A25 6.3 0 0 1 825.4 446.6Z" fill="rgb(130,160,184)"/><path d="M800 300H860V446.6H800Z" fill="rgb(168,130,182)"/><path d="M825.4 446.6A25 6.3 0 0 1 875.4 446.6Z" fill="rgb(130,160,184)"/><path d="M759.75 0H940.85V359.4A90.55 23.1 0 0 1 759.75 359.4Z" fill="rgb(172,80,196)"/><path d="M796.3 0H904.5V359.6A54.1 13.7 0 0 1 796.3 359.6Z" fill="rgb(150,64,180)"/><rect x="800" y="300" width="60" height="59.6" fill="rgb(138,46,172)"/><path d="M759.75 359.6A90.55 23.1 0 0 1 940.85 359.6Z" fill="rgb(140,50,164)"/><path d="M796.3 359.6A54.1 13.7 0 0 1 904.5 359.6Z" fill="rgb(150,52,176)"/><ellipse cx="850.4" cy="359.6" rx="37.5" ry="9.6" fill="rgb(160,92,182)"/><rect x="813" y="300" width="75" height="180" fill="url(#gShade)"/></g><g clip-path="url(#cBandBot)"><g clip-path="url(#cBelowInB)"><path d="M826 446V480H850.5V446Z" fill="rgb(88,190,142)"/></g></g><path d="M884 311V382Q888 372 888 366V311Z" fill="rgb(132,58,162)"/><g clip-path="url(#cRed)"><rect x="840" y="300" width="50" height="220" fill="rgb(182,76,76)"/><path d="M759.75 0H940.85V446.9A90.55 22.6 0 0 1 759.75 446.9Z" fill="rgb(192,110,54)"/><path d="M796.3 0H904.5V446.6A54.1 13.6 0 0 1 796.3 446.6Z" fill="rgb(196,100,120)"/><path d="M825.4 0H875.4V446.6A25 6.3 0 0 1 825.4 446.6Z" fill="rgb(226,76,92)"/><rect x="875" y="300" width="12" height="143.500" fill="rgb(222,74,92)"/><path d="M759.75 0H940.85V359.4A90.55 23.1 0 0 1 759.75 359.4Z" fill="rgb(216,36,126)"/><path d="M812.9 0H887.9V359.6A37.5 9.6 0 0 1 812.9 359.6Z" fill="rgb(240,0,68)"/><path d="M884.500 380Q882 396 877.500 408Q876 414 876 420V470H890V380Z" fill="rgb(120,60,120)" fill-opacity="0.18"/><path d="M884.500 380Q882 396 877.500 408Q876 414 876 420V468" fill="none" stroke="rgb(150,70,130)" stroke-width="0.9"/></g><path d="M811.3 118.7V311.4A38.7 10.2 0 0 0 888.7 311.4V118.7Z" fill="url(#gCore)"/><g clip-path="url(#cTop)"><rect x="811.3" y="118.7" width="77.4" height="30" fill="url(#gCoreTop)"/></g><ellipse cx="850" cy="118.7" rx="38.5" ry="9.9" fill="url(#gCoreCap)" stroke="rgb(58,62,64)" stroke-width="1"/><g clip-path="url(#cRed)"><path d="M811.3 0H888.7V311.4A38.7 10.2 0 0 1 811.3 311.4Z" fill="rgb(196,60,46)"/></g><path d="M825.500 316C826 324.500 832 330.600 850 330.600C868 330.600 873.500 324.500 874 316A38.7 10.2 0 0 1 825.500 316Z" fill="rgb(120,102,136)"/><g clip-path="url(#cRed)"><path d="M825.500 316C826 324.500 832 330.600 850 330.600C868 330.600 873.500 324.500 874 316A38.7 10.2 0 0 1 825.500 316Z" fill="rgb(196,58,44)"/></g><path d="M824 313.800Q836 319 850 319.300Q866 319 876.800 313.500Q866 321.800 850 321.600Q834 321.600 824 313.800Z" fill="rgb(84,140,96)"/><path d="M871 317.300L876.800 313.500Q875 317.500 872.500 319.500Z" fill="rgb(176,100,30)"/><ellipse cx="850.3" cy="118.7" rx="90.55" ry="22.7" fill="none" stroke="#34343a" stroke-width="1.1"/><path d="M811.5 139.2A90.55 22.7 0 0 0 888.5 139.3" fill="none" stroke="rgb(48,112,48)" stroke-width="1"/><ellipse cx="850" cy="311.4" rx="38.7" ry="10.2" fill="none" stroke="#34343a" stroke-width="1.1"/><ellipse cx="850.3" cy="359.4" rx="90.55" ry="23.1" fill="none" stroke="#34343a" stroke-width="1.1"/><ellipse cx="850.4" cy="359.6" rx="54.1" ry="13.7" fill="none" stroke="rgb(84,40,96)" stroke-width="0.9"/><ellipse cx="850.3" cy="446.9" rx="90.55" ry="22.6" fill="none" stroke="#34343a" stroke-width="1.1"/><path d="M796.3 428.8A90.55 22.6 0 0 1 904.5 428.9" fill="none" stroke="rgb(100,52,122)" stroke-width="0.9"/><ellipse cx="850.4" cy="446.6" rx="54.1" ry="13.6" fill="none" stroke="#34343a" stroke-width="1.1"/><ellipse cx="850.3" cy="665.8" rx="90.55" ry="22.7" fill="none" stroke="#34343a" stroke-width="1.1"/><path d="M811.3 118.7V311.4M888.7 118.7V311.4" stroke="rgb(70,64,82)" stroke-width="0.8"/><path d="M796.3 359.6V446.6M904.5 359.6V446.6" stroke="rgb(90,104,100)" stroke-width="0.8"/><path d="M826 470V611M876 470V611" stroke="rgb(48,140,154)" stroke-width="0.8"/><line x1="1195.1" y1="120.4" x2="1214.4" y2="109.5" stroke="#fff" stroke-width="1.1" stroke-linecap="round"/><line x1="1195.1" y1="120.4" x2="1195.1" y2="143.6" stroke="#fff" stroke-width="1" stroke-linecap="round"/><line x1="1214.4" y1="109.5" x2="1214.7" y2="155.2" stroke="#fff" stroke-width="1" stroke-linecap="round"/><line x1="1195.1" y1="120.4" x2="1214.7" y2="155.2" stroke="#fff" stroke-width="1.1" stroke-linecap="round"/><line x1="1214.4" y1="109.5" x2="1195.1" y2="143.6" stroke="#fff" stroke-width="0.6" stroke-linecap="round"/><line x1="1195.1" y1="143.6" x2="1234.7" y2="121" stroke="#fff" stroke-width="0.6" stroke-linecap="round"/><line x1="1195.1" y1="143.6" x2="1234.7" y2="143.6" stroke="#fff" stroke-width="0.7" stroke-linecap="round"/><line x1="1234.7" y1="121" x2="1234.7" y2="143.6" stroke="#fff" stroke-width="1" stroke-linecap="round"/><line x1="1234.7" y1="121" x2="1214.7" y2="155.2" stroke="#fff" stroke-width="1.1" stroke-linecap="round"/><line x1="1234.7" y1="143.6" x2="1214.7" y2="155.2" stroke="#fff" stroke-width="1.1" stroke-linecap="round"/><line x1="1205.6" y1="694" x2="1205.6" y2="723" stroke="#1a2a3a" stroke-width="1"/><line x1="1207.2" y1="694" x2="1207.2" y2="723" stroke="#2d9be6" stroke-width="2.4"/><line x1="1193" y1="716" x2="1206.500" y2="723" stroke="#1a7a1a" stroke-width="2.2"/><line x1="1207" y1="722.500" x2="1233.500" y2="719.500" stroke="#c81e28" stroke-width="2.6"/><text x="1202.500" y="689" font-family="Liberation Sans,sans-serif" font-size="12.500" fill="#2d9be6">Z</text><text x="1185.500" y="717.500" font-family="Liberation Sans,sans-serif" font-size="12.500" fill="#2db42d">Y</text><text x="1236.500" y="723" font-family="Liberation Sans,sans-serif" font-size="12.500" fill="#d0202c">X</text></svg><span class="t" style="left:10px;top:7px;color:#f0f0f0"><i style="font-size:13px">模型圖標</i></span><div style="left:10px;top:25px;width:116px;height:1px;background:#ececec"></div><div style="left:10px;top:29px;width:29px;height:127px;background:#f4f4f4"></div><div style="left:11px;top:30px;width:27px;height:17px;background:#ff0000"></div><span class="t" style="left:43px;top:29px;letter-spacing:0.179px;color:#e4e4e4">Workpiece</span><div style="left:11px;top:48px;width:27px;height:17px;background:#9cff3c"></div><span class="t" style="left:43px;top:47px;letter-spacing:0.269px;color:#e4e4e4">st2-band</span><div style="left:11px;top:66px;width:27px;height:17px;background:#a040ff"></div><span class="t" style="left:43px;top:65px;letter-spacing:0.171px;color:#e4e4e4">st2-core</span><div style="left:11px;top:84px;width:27px;height:17px;background:#2000ff"></div><span class="t" style="left:43px;top:83px;letter-spacing:0.214px;color:#e4e4e4">st2-ejector</span><div style="left:11px;top:102px;width:27px;height:17px;background:#00ffff"></div><span class="t" style="left:43px;top:101px;letter-spacing:0.195px;color:#e4e4e4">st2-lowerDie</span><div style="left:11px;top:120px;width:27px;height:17px;background:#a000c0"></div><span class="t" style="left:43px;top:119px;letter-spacing:0.325px;color:#e4e4e4">st2-ring</span><div style="left:11px;top:138px;width:27px;height:17px;background:#18c000"></div><span class="t" style="left:43px;top:137px;letter-spacing:0.226px;color:#e4e4e4">st2-upperDie</span><span class="t" style="left:9px;top:615px;letter-spacing:0.125px;color:#f0f0f0;font-size:13.400px">Stage2 - <i style="font-size:13px">模型檢視</i></span><div style="left:9px;top:634px;width:108px;height:1px;background:#ececec"></div><div style="left:754px;top:240px;width:51px;height:208px;background:rgb(166,174,182);border-radius:8px"></div><svg style="left:754px;top:240px" width="51" height="208" viewBox="0 0 51 208"><path d="M37.500 12.500L42 8L46.500 12.500" fill="none" stroke="#111" stroke-width="1.600"/><rect x="7" y="21" width="24" height="24" rx="3" fill="rgb(198,202,206)"/><path d="M37 31H45L41 35.5Z" fill="#222"/><path d="M37 61H45L41 65.5Z" fill="#222"/><rect x="7" y="81" width="24" height="24" rx="3" fill="rgb(198,202,206)"/><path d="M37 91H45L41 95.5Z" fill="#222"/><rect x="7" y="110.5" width="24" height="24" rx="3" fill="rgb(198,202,206)"/><path d="M37 120.5H45L41 125Z" fill="#222"/><path d="M37 150.5H45L41 155Z" fill="#222"/><rect x="7" y="177" width="24" height="24" rx="3" fill="rgb(198,202,206)"/><path d="M37 187H45L41 191.5Z" fill="#222"/><path d="M7 170.500H44" stroke="rgb(208,212,216)" stroke-width="1"/><path d="M9 34L19.400 25.5L21 27V22.7H24V29.7L29.300 34" fill="none" stroke="#444" stroke-width="1.300"/><path d="M12 31.5V43H26.500V31.5" fill="none" stroke="#3c4650" stroke-width="1.300"/><rect x="16.700" y="35.7" width="4.600" height="7.300" fill="#fff" stroke="#3c4650" stroke-width="1.100"/><rect x="9" y="64" width="9" height="9" rx="1.500" fill="#fff" stroke="#444" stroke-width="1.200"/><rect x="13" y="60" width="9" height="9" rx="1.500" fill="#fff" stroke="#444" stroke-width="1.200"/><rect x="17" y="56" width="9" height="9" rx="1.500" fill="#fff" stroke="#444" stroke-width="1.200"/><path d="M14 56Q22 48 29 61" fill="none" stroke="#444" stroke-width="1.300"/><path d="M27 59L29.500 62.5L31.500 58.5" fill="none" stroke="#444" stroke-width="1.300"/><circle cx="19" cy="93" r="1.800" fill="#fff" stroke="#444" stroke-width="1"/><path d="M9.5 83.5L15.5 89.5M15.5 89.5H11M15.5 89.5V85" fill="none" stroke="#444" stroke-width="1.300"/><path d="M28.5 83.5L22.5 89.5M22.5 89.5H27M22.5 89.5V85" fill="none" stroke="#444" stroke-width="1.300"/><path d="M9.5 102.5L15.5 96.5M15.5 96.5H11M15.5 96.5V101" fill="none" stroke="#444" stroke-width="1.300"/><path d="M28.5 102.5L22.5 96.5M22.5 96.5H27M22.5 96.5V101" fill="none" stroke="#444" stroke-width="1.300"/><path d="M19 118.5V131.5" fill="none" stroke="#444" stroke-width="1.300"/><path d="M16.300 119.5V130H9.500Z" fill="#fff" stroke="#3c4650" stroke-width="1.100"/><path d="M21.700 119.5V130H28.500Z" fill="rgb(226,228,230)" stroke="#76808a" stroke-width="1"/><path d="M11 120.5Q19 108.5 27 119.5" fill="none" stroke="#444" stroke-width="1.300"/><path d="M24 119.5L27.500 121L28.500 116.5" fill="none" stroke="#444" stroke-width="1.300"/><rect x="8" y="141.3" width="20" height="20.500" rx="2.500" fill="rgb(158,166,174)" stroke="#3c4650" stroke-width="1.200"/><path d="M15 149.500L27.500 162" stroke="#26323e" stroke-width="3.800" stroke-linecap="round"/><circle cx="13.300" cy="147.800" r="4.700" fill="#26323e"/><path d="M14.010 146.390L11.890 148.510L7.500 144.100L9.600 142Z" fill="rgb(158,166,174)"/><path d="M14 196.5A9 9 0 0 1 21 180.2" fill="none" stroke="#444" stroke-width="1.300"/><path d="M18.500 178L21.500 180.4L18.800 183" fill="none" stroke="#444" stroke-width="1.300"/><path d="M24 181.5A9 9 0 0 1 17 197.8" fill="none" stroke="#444" stroke-width="1.300"/><path d="M19.500 200L16.500 197.6L19.200 195" fill="none" stroke="#444" stroke-width="1.300"/><rect x="13" y="187.5" width="5" height="5.500" fill="#fff" stroke="#3c4650" stroke-width="0.900"/><rect x="20" y="187.5" width="5" height="5.500" fill="#fff" stroke="#3c4650" stroke-width="0.900"/><rect x="16.800" y="183.8" width="4.400" height="4.400" fill="#fff" stroke="#3c4650" stroke-width="0.900"/></svg></div>
<div id="bottom"><svg style="left:3px;top:4px" width="4" height="28" viewBox="0 0 4 28"><rect x="0" y="0" width="2" height="2" fill="#fff"/><rect x="1" y="1" width="2" height="2" fill="#a0a0a0"/><rect x="0" y="4" width="2" height="2" fill="#fff"/><rect x="1" y="5" width="2" height="2" fill="#a0a0a0"/><rect x="0" y="8" width="2" height="2" fill="#fff"/><rect x="1" y="9" width="2" height="2" fill="#a0a0a0"/><rect x="0" y="12" width="2" height="2" fill="#fff"/><rect x="1" y="13" width="2" height="2" fill="#a0a0a0"/><rect x="0" y="16" width="2" height="2" fill="#fff"/><rect x="1" y="17" width="2" height="2" fill="#a0a0a0"/><rect x="0" y="20" width="2" height="2" fill="#fff"/><rect x="1" y="21" width="2" height="2" fill="#a0a0a0"/><rect x="0" y="24" width="2" height="2" fill="#fff"/><rect x="1" y="25" width="2" height="2" fill="#a0a0a0"/></svg><div style="left:10px;top:7px;width:210px;height:20px;background:#e1e1e1;border:1px solid #adadad"></div><svg style="left:15px;top:10px" width="14" height="14" viewBox="0 0 16 16"><rect x="0" y="0" width="16" height="16" rx="3.6" fill="#f4673f"/><path d="M2.6 5.2L5 3.2L8 4.4L11 3.2L13.4 5.2L13.2 8.8L8 13L2.8 8.8Z" fill="#2a0c0a"/><path d="M5 5L8 7L11 5M8 7V11" stroke="#6a2a1c" stroke-width="0.8" fill="none"/></svg><span class="t" style="left:32px;top:8px;height:20px;line-height:20px">Stage2</span><svg style="left:206px;top:15px" width="10" height="6" viewBox="0 0 10 6"><path d="M1 0.700L5 4.700L9 0.700" fill="none" stroke="#444" stroke-width="1.100"/></svg><div style="left:222px;top:5px;width:1px;height:24px;background:#d0d0d0"></div><div style="left:226px;top:7px;width:100px;height:20px;background:#e6e6e6;border:1px solid #bcbcbc"></div><span class="t" style="left:226px;top:8px;width:100px;text-align:center;height:20px;line-height:20px">0.00 %</span><div style="left:332px;top:7px;width:274px;height:20px;background:#e6e6e6;border:1px solid #bcbcbc"></div><span class="t" style="left:332px;top:7px;width:274px;text-align:center;height:20px;line-height:20px;font-size:12px">模擬未開始.</span><div style="left:606px;top:7px;width:20px;height:20px;background:#cce4f7;border:1px solid #b4d4ee"></div><svg style="left:608px;top:13px" width="16" height="9" viewBox="0 0 16 9"><path d="M0 0H16L8 8.500Z" fill="#000"/></svg><div style="left:629px;top:5px;width:1px;height:24px;background:#d0d0d0"></div><svg style="left:634px;top:5px" width="24" height="24" viewBox="0 0 24 24"><path d="M5 6.500H9.500V1.600L21.700 11.600L9.500 21.700V16.700H5Z" fill="#489e2c" stroke="#2f6b1e" stroke-width="0.800" stroke-linejoin="round"/></svg><svg style="left:666px;top:5px" width="24" height="24" viewBox="0 0 24 24"><circle cx="12" cy="12" r="11" fill="#8c8c8c"/><rect x="7.500" y="7.500" width="9" height="9" fill="#fff"/></svg><svg style="left:695px;top:15px" width="8" height="5" viewBox="0 0 8 5"><path d="M0.500 0.500H7.500L4 4.500Z" fill="#666"/></svg><svg style="left:709px;top:5px" width="24" height="24" viewBox="0 0 24 24"><path d="M4.500 13.500Q4.500 5.500 12 5.500Q16.500 5.500 18.500 9" fill="none" stroke="#3e9a2e" stroke-width="2.200"/><path d="M1 11L4.800 16L8.500 10.500" fill="none" stroke="#3e9a2e" stroke-width="2.200"/><path d="M19.500 10.500Q19.500 18.500 12 18.500Q7.500 18.500 5.500 15.500" fill="none" stroke="#3a3a3a" stroke-width="2.200"/><path d="M15.500 13.500L19.500 8.500L23.500 13.500" fill="none" stroke="#3a3a3a" stroke-width="2.200"/></svg><svg style="left:740px;top:5px" width="24" height="24" viewBox="0 0 24 24"><rect x="2.500" y="3.500" width="19" height="20" rx="1.500" fill="#c8c8c8" stroke="#333" stroke-width="1.300"/><rect x="5" y="6" width="14" height="15.500" fill="#fff" stroke="#555" stroke-width="0.800"/><rect x="8.500" y="1" width="7" height="4.500" rx="1" fill="#f08a2c" stroke="#a85a10" stroke-width="0.800"/><path d="M12 9.500H17M12 13.500H17M12 17.500H17" stroke="#333" stroke-width="1.200"/><path d="M6.500 9.500L8 11L10.500 8M6.500 13.500L8 15L10.500 12M6.500 17.500L8 19L10.500 16" fill="none" stroke="#2ca02c" stroke-width="1.200"/></svg><div style="left:771px;top:5px;width:1px;height:24px;background:#d0d0d0"></div><svg style="left:777px;top:5px" width="24" height="24" viewBox="0 0 24 24"><path d="M3 1.500L6.800 9" stroke="#7a7a7a" stroke-width="1.800"/><path d="M4 8.500L9.500 6.500" stroke="#7a7a7a" stroke-width="1.600"/><path d="M5.500 9.500L9.500 7.500Q17 11 22.500 17.500L17 20.500L12.500 23L8 23Q8.500 15 5.500 9.500Z" fill="#c8c8c8"/><path d="M9 12L10.500 22.500M11 11L15 21.500M13 11L19 19.500" stroke="#e2e2e2" stroke-width="0.800"/></svg><svg style="left:807px;top:5px" width="24" height="24" viewBox="0 0 24 24"><path d="M2.500 1.500H15.500L19.500 5V20.500H2.500Z" fill="#f6f6f6" stroke="#a8a8a8" stroke-width="1.200"/><path d="M5.500 6H15M5.500 9H15M5.500 12H12M5.500 15H10" stroke="#b0b0b0" stroke-width="1.100"/><circle cx="17.500" cy="18" r="5.800" fill="#f0f0f0" stroke="#a8a8a8" stroke-width="1.200"/><path d="M21 18H14.500M17 15L14 18L17 21" fill="none" stroke="#a8a8a8" stroke-width="1.800"/></svg><svg style="left:837px;top:15px" width="8" height="5" viewBox="0 0 8 5"><path d="M0.500 0.500H7.500L4 4.500Z" fill="#666"/></svg><div style="left:850px;top:5px;width:1px;height:24px;background:#d0d0d0"></div><svg style="left:857px;top:5px" width="24" height="24" viewBox="0 0 24 24"><path d="M22.87 11.14L22.87 12.86L20.06 13.93L19.65 15.17L21.29 17.70L20.29 19.08L17.38 18.30L16.33 19.06L16.17 22.07L14.54 22.60L12.65 20.26L11.35 20.26L9.46 22.60L7.83 22.07L7.67 19.06L6.62 18.30L3.71 19.08L2.71 17.70L4.35 15.17L3.94 13.93L1.13 12.86L1.13 11.14L3.94 10.07L4.35 8.83L2.71 6.30L3.71 4.92L6.62 5.70L7.67 4.94L7.83 1.93L9.46 1.40L11.35 3.74L12.65 3.74L14.54 1.40L16.17 1.93L16.33 4.94L17.38 5.70L20.29 4.92L21.29 6.30L19.65 8.83L20.06 10.07Z" fill="#707070" stroke="#5c5c5c" stroke-width="0.6" stroke-linejoin="round"/><circle cx="12" cy="12" r="5.600" fill="#f0f0f0" stroke="#5c5c5c" stroke-width="0.600"/><circle cx="12" cy="12" r="2.500" fill="#686868"/></svg><svg style="left:886px;top:15px" width="8" height="5" viewBox="0 0 8 5"><path d="M0.500 0.500H7.500L4 4.500Z" fill="#222"/></svg><svg style="left:900px;top:5px" width="24" height="24" viewBox="0 0 24 24"><path d="M9.500 1.500H22.500V17H9.500Z" fill="#1c8cb4"/><path d="M6.500 4H19V19.500H6.500Z" fill="#1c8cb4" stroke="#f0f0f0" stroke-width="1"/><path d="M3 6.500H16V23H3Z" fill="#1c8cb4" stroke="#f0f0f0" stroke-width="1"/><text x="6.500" y="20" font-family="Liberation Sans,sans-serif" font-weight="bold" font-size="11" fill="#fff">?</text></svg><div style="left:930px;top:5px;width:1px;height:24px;background:#d0d0d0"></div><svg style="left:1243px;top:42px" width="10" height="10" viewBox="0 0 10 10"><g fill="#c6c6c6"><rect x="7" y="1" width="2" height="2"/><rect x="4" y="4" width="2" height="2"/><rect x="7" y="4" width="2" height="2"/><rect x="1" y="7" width="2" height="2"/><rect x="4" y="7" width="2" height="2"/><rect x="7" y="7" width="2" height="2"/></g></svg></div>
</body></html>
